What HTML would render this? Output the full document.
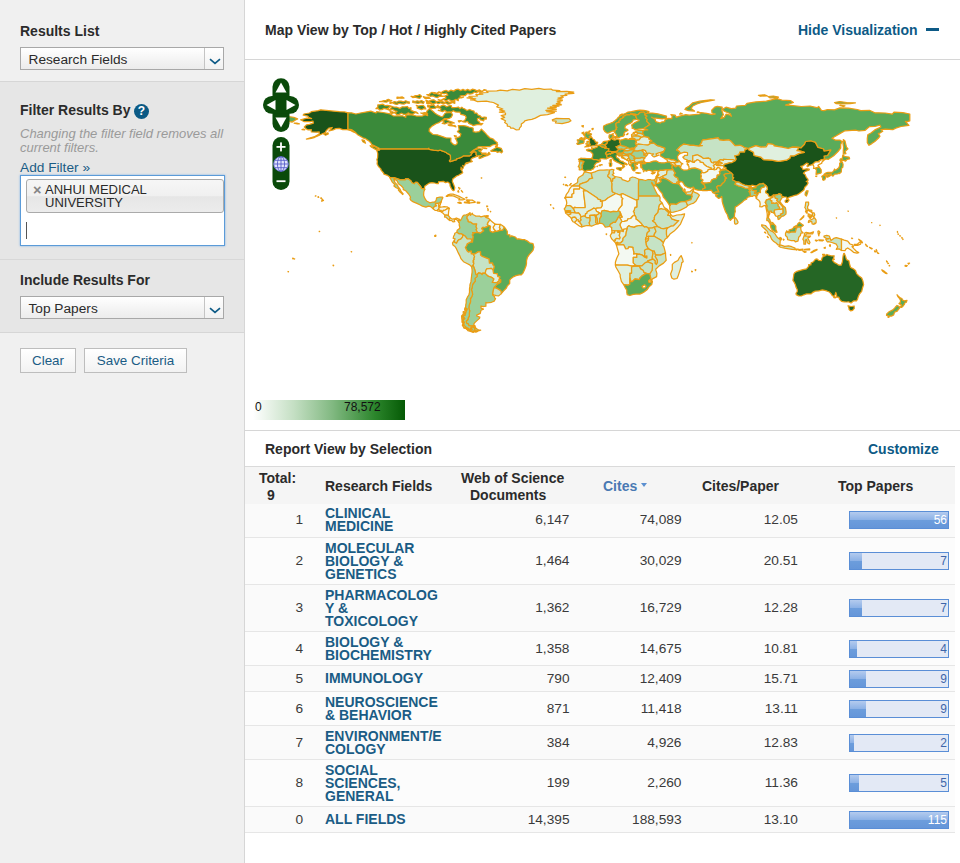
<!DOCTYPE html>
<html>
<head>
<meta charset="utf-8">
<title>Essential Science Indicators</title>
<style>
*{box-sizing:border-box;margin:0;padding:0}
html,body{width:960px;height:863px;overflow:hidden;background:#fff;font-family:"Liberation Sans",sans-serif;color:#333}
#side{position:absolute;left:0;top:0;width:245px;height:863px;background:#f0f0f0;border-right:1px solid #d6d6d6}
.sec{position:absolute;left:0;width:244px}
.dark{background:#e6e6e6;border-top:1px solid #d6d6d6;border-bottom:1px solid #d6d6d6}
.h{position:absolute;left:20px;font-size:14px;font-weight:bold;color:#2b2b2b;white-space:nowrap;line-height:18px}
.sel{position:absolute;left:20px;width:204px;height:23px;border:1px solid #a8a8a8;background:linear-gradient(#ffffff,#f3f3f3 60%,#ececec);font-size:13.7px;line-height:22.4px;padding-left:7.5px;padding-top:0.6px;color:#2b2b2b}
.sel i{position:absolute;right:0;top:0;width:19px;height:21px;border-left:1px solid #c4c4c4;background:linear-gradient(#ffffff,#f1f1f1)}
.sel svg{position:absolute;left:4px;top:9.5px}
.btn{position:absolute;top:348px;height:25px;border:1px solid #bdbdbd;background:linear-gradient(#ffffff,#f2f2f2);font-size:13.4px;line-height:24.4px;color:#1a5c85;text-align:center}
#main{position:absolute;left:245px;top:0;width:715px;height:863px;background:#fff}
.t{position:absolute;white-space:nowrap}
.r{position:absolute;left:0;width:710px;border-bottom:1px solid #e6e6e6}
.r span{position:absolute;white-space:nowrap}
.n{font-size:13.7px;line-height:16px;color:#3a3a3a}
.f{left:80px;font-size:14px;font-weight:bold;line-height:12.8px;color:#1a5c85}
.b{left:604px;width:100px;height:18px;border:1px solid #5a8ed6;background:#e3e9f5}
.b i{position:absolute;left:0;top:0;height:16px;background:linear-gradient(#b4cbee 0%,#8db2e6 48%,#6c9ddc 52%,#6596d9 100%)}
.b b{position:absolute;right:1px;top:1px;font-size:12px;line-height:14px;font-weight:normal}
</style>
</head>
<body>
<div id="side">
  <div class="h" style="top:22px">Results List</div>
  <div class="sel" style="top:47px">Research Fields<i><svg width="12" height="7" viewBox="0 0 12 7"><path d="M1 1.2 L6 5.4 L11 1.2" fill="none" stroke="#0d5a86" stroke-width="1.7"/></svg></i></div>

  <div class="sec dark" style="top:81px;height:252px"></div>
  <div class="sec" style="top:259px;height:1px;background:#d8d8d8"></div>
  <div class="h" style="top:101px">Filter Results By</div>
  <div style="position:absolute;left:134px;top:104px;width:15px;height:15px;border-radius:50%;background:#0b5a85;color:#fff;font-size:12px;font-weight:bold;line-height:15px;text-align:center">?</div>
  <div style="position:absolute;left:20px;top:127px;width:215px;font-size:13px;line-height:14px;font-style:italic;color:#9a9a9a">Changing the filter field removes all<br>current filters.</div>
  <div class="t" style="left:20px;top:159.7px;font-size:13.7px;line-height:16px;color:#1a5c85">Add Filter »</div>
  <div style="position:absolute;left:20px;top:175px;width:205px;height:71px;background:#fff;border:1px solid #5b9bd8;box-shadow:0 0 2px #7db1e6"></div>
  <div style="position:absolute;left:26px;top:179px;width:198px;height:34px;border:1px solid #aaa;border-radius:3px;background:linear-gradient(#f6f6f6 0%,#f0f0f0 50%,#e6e6e6 52%,#ececec 100%)"></div>
  <div class="t" style="left:33px;top:182.5px;font-size:14.5px;font-weight:bold;color:#858585;line-height:14px">×</div>
  <div style="position:absolute;left:45px;top:184px;font-size:13px;line-height:12.5px;color:#2a2a2a">ANHUI MEDICAL<br>UNIVERSITY</div>
  <div style="position:absolute;left:26px;top:222px;width:1px;height:17px;background:#555"></div>

  <div class="h" style="top:271px">Include Results For</div>
  <div class="sel" style="top:296px">Top Papers<i><svg width="12" height="7" viewBox="0 0 12 7"><path d="M1 1.2 L6 5.4 L11 1.2" fill="none" stroke="#0d5a86" stroke-width="1.7"/></svg></i></div>

  <div class="btn" style="left:20px;width:56px">Clear</div>
  <div class="btn" style="left:84px;width:103px">Save Criteria</div>
</div>

<div id="main">
  <div class="t" style="left:20px;top:21px;font-size:14px;font-weight:bold;color:#2b2b2b;line-height:18px">Map View by Top / Hot / Highly Cited Papers</div>
  <div class="t" style="left:553px;top:21px;font-size:14px;font-weight:bold;color:#0d5a86;line-height:18px">Hide Visualization</div>
  <div style="position:absolute;left:681px;top:28px;width:13px;height:3px;background:#0d5a86"></div>
  <div style="position:absolute;left:0;top:59px;width:715px;height:1px;background:#d6d6d6"></div>

  <!-- MAP -->
  <svg id="map" style="position:absolute;left:0;top:60px" width="715" height="370" viewBox="245 60 715 370">
  <g stroke="#ea9d14" stroke-width="1.25" stroke-linejoin="round">
<path fill="#1a531a" d="M376.6 149.9L379.5 150.2L379.9 148.8L402.3 148.8L428.2 148.8L428.9 148.1L429.2 149.4L433.8 150.1L438.2 150.6L440.1 150.1L446.4 152.5L446.9 153.2L448.7 154.1L450.4 155.3L450.6 159.3L449.4 160.8L450.1 161.6L456.5 159.7L456.5 158.8L458.3 158.3L461.1 157.4L463.5 155.8L469.7 155.8L470.9 155.1L471.8 153.4L473.7 151.6L475.3 151.8L476.1 152.2L476.1 154.6L476.8 155.7L477.5 156.2L474.9 157.1L472.3 158.1L471.1 159.3L470.9 160.6L472.3 161.4L471.2 162L469.7 162.1L467.2 162.5L465.6 163.2L468.8 162.8L467 163.6L465.3 163.7L464.9 165.1L463.7 166.3L462.7 165.5L463.4 166.7L463.2 168.1L461.8 169.7L461.1 167.2L460.9 169.5L462 170.6L462.7 172.8L460.9 173.9L458.5 175.3L456.5 176L454.8 177.5L453 178.6L452.3 181.2L453.8 184.9L454.8 187.7L454.4 190L453.4 190.7L452.7 190.3L451.6 188.9L450.1 185.9L449.9 183.8L448.1 182.1L447.3 182.1L445.5 182.6L443.4 181.4L440.8 181.6L438.7 181.6L438.3 183.5L436.4 183.5L434.7 183L432 182.6L429.1 183.2L426.8 184.7L424.7 186.3L424.3 189.1L424.8 189.2L421.4 188.4L420.7 186.5L418.9 184.5L417.3 182.4L415.4 182.4L414.2 183.8L411.9 182.8L411 180.9L408.4 178.9L405.4 178.9L405.4 179.8L400.5 179.8L393.9 177.7L389.9 177.7L389.5 176.8L387.6 175.4L386.2 174.9L383.9 174.2L383.6 173L381.5 170.6L380.4 168.4L379.5 167.6L378.1 165.8L377.1 163.9L377.4 161.4L376.9 159.7L377.6 157.6L377.8 153.8L377.6 152.9ZM355.9 132.8L354.2 131.5L351.5 129.6L348 129.1L348 112.8L344.5 111.9L339.3 111.7L334 111.2L328.8 110.7L320.7 109.8L318.3 110.7L314.8 111.2L311.3 111.7L309.5 113L303.9 114L303.2 115.1L307.8 116.1L308.7 117.3L311.6 118.6L306.9 118.2L300.6 119.8L304.3 121.7L310.4 121.7L313 121.2L313.4 123.1L309.5 124.3L306.4 124.9L304.3 127L306 128.7L307.8 129.8L311.3 129.6L311.3 131.9L316.5 132.2L319.2 131.9L319.2 134L314.8 136.6L310.4 137.8L306.4 139.1L311.3 138.3L314.8 137.3L318.3 135.7L321.8 134L325.3 132.6L326.2 130.8L328.8 128.2L332.3 127.5L329 131L333.2 129.8L335.8 128.7L339.3 128.4L342.8 129.6L347.2 129.6L350.1 130.3L353.3 131.9ZM323.9 134.3L325.6 135.2L328.3 134L327.9 132.8L326.2 133.3ZM294.1 123.1L297.3 124L299.4 123.8L296.8 123.1ZM303.4 129.1L304.8 129.8L302 129.6ZM321.8 201.3L323.5 200.5L322.1 199.2ZM317.9 197.2L318.8 197.3L318.3 196.6ZM315.3 196.1L316 195.9L315.7 195.8ZM320.7 198.2L321.8 198.4L321.1 197.8Z"/>
<path fill="#3a8a3a" d="M348 112.8L351.5 112.8L355.9 114L360.3 113L365.5 112.1L370.8 111.2L376 113L376.6 111.7L383 112.5L390 113.8L393.5 116L402.3 115.8L405.8 117.3L405.8 115.1L411 114.7L416.3 116L422.4 116L425 114.7L427.7 115.6L426.8 113L426.8 111.2L429.4 108.6L432.9 111.2L434.7 113L437.3 114.7L440.8 116.5L442.5 116.8L445.2 113L451.3 112.5L452.5 114.7L451.3 117.3L448.7 118.7L444.3 118.6L442.5 120.3L439 122.6L436.4 123.5L432 126.1L429.4 128.7L429.1 131.3L432.9 134.5L437.3 134.8L442.5 136.6L446 137.8L450.9 138L450.8 141.8L453 144.1L454.8 145L456.5 144.5L457.4 142.7L456.5 140.1L455.3 138.3L460 136.6L460.9 134L457.4 131.7L459.2 129.6L458.3 125.6L463.5 125.6L466.2 126.1L468.8 127L472.3 127.8L473.2 128.2L473.2 131.7L475.8 132.2L479.3 131.7L481.4 129.1L484.5 132.2L487.2 135.2L489.8 137.8L493.3 139.2L495 141L497.3 142.7L496.8 144.1L492.4 145L489.8 146.6L484.5 146.6L478.4 146.8L476.7 148.3L474 149.7L471.4 151.8L470.2 152.7L472.3 151.8L474.9 149.7L479.3 148.5L482.3 149.2L481 150.6L478.8 150.6L481 152L481.9 153.6L483.1 154.1L487.2 154.6L488.9 152.3L490.1 154.1L488 155.3L484.5 156.4L481.9 157.6L479.8 158.5L478.9 157.9L479.3 156.7L481.9 155.3L480.2 155.5L478.4 155.7L477.5 156.2L476.8 155.7L476.1 154.6L476.1 152.2L475.3 151.8L473.7 151.6L471.8 153.4L470.9 155.1L469.7 155.8L463.5 155.8L461.1 157.4L458.3 158.3L456.5 158.8L456.5 159.7L450.1 161.6L449.4 160.8L450.6 159.3L450.4 155.3L448.7 154.1L446.9 153.2L446.4 152.5L440.1 150.1L438.2 150.6L433.8 150.1L429.2 149.4L428.9 148.1L428.2 148.8L402.3 148.8L379.9 148.8L379.2 148.3L376.9 147.1L373.4 145.3L371.7 144.5L370.8 142.7L369 141L366.8 139.6L365.5 138.7L362.9 137.8L360.3 136.2L357.7 134.8L355.9 132.8L354.2 131.5L351.5 129.6L348 129.1ZM370.1 145.7L375.5 146.9L378.8 149.9L376 149.6L371.7 147.3ZM362 139.9L364.3 140.3L365.5 143.2L362.9 141.8ZM490.8 150.8L496.8 147.3L497.7 144.3L497 144.5L495.4 146.6L497.7 147.3L501.2 148.3L502.6 151.5L501.5 152.9L499.9 151.6L497.1 152.5L496.8 151.3L494.2 151.3L491.2 151.3ZM482.1 147.4L486.8 148.7L483.7 148.3ZM482.3 153.1L486.3 153.2L485.4 154.3L483.1 153.9ZM451.3 124.5L454.3 126.1L449.5 125.7L448.1 124.9ZM442.5 120.5L446 119.5L447.8 120.5L452.2 122.2L454.4 123L450.4 123.3L447.8 122.6L444.8 124L442.2 123.3L444.3 122.2ZM454.8 125.4L456 126.8L454.4 126.5ZM454.3 135.6L456.5 136.2L455.1 136.8ZM437.3 105.3L439.6 106.7L442 105.5L444.3 105.3L446.6 106.8L449 105.7L451.3 105.6L451.8 107.7L453.9 107.6L456.1 107.5L458.3 107L460 108.5L461.8 107.2L463 108.2L464.4 108.8L466.9 110.5L469.7 109.5L471.8 110.5L474 111.1L474.5 113.1L476.7 113L478.1 115.1L480.1 115.8L481.8 117.6L484.2 117L486.3 117.3L486.3 119.1L484.2 118.8L483.7 120.8L482 120.2L480.2 120L479.5 118L477.5 118.6L477.5 120.5L479.2 121.7L480.4 123.7L482.8 123.5L481 125L478.4 124.3L475.8 124.9L473.2 125.6L471.1 124.3L468.8 123.5L467.6 121.5L465.3 122.1L463.3 121.9L461.2 120.7L459.2 122.1L458.3 120.8L460.7 120.7L463.2 121.5L465.3 119.8L466.2 117.3L465.3 115.6L463.2 114.8L460.9 114.4L459.9 112.1L457.4 112.1L455.4 111.9L453.3 110.7L451.3 112.1L449.1 111.9L446.9 112.1L444.9 110.4L442.5 111.6L440.4 110.8L438.2 110.3L440.3 110.6L440.8 108.6L439.3 107.9L437.6 107.6ZM387.4 109.5L390.4 109.1L391.8 106.5L394.4 107.1L397 107.2L399.8 108.4L402.3 106.8L404.9 106.9L407.5 106.5L408.8 108.4L411 107.7L411 110.3L413.6 111.4L416.3 112.1L418 113.5L415.2 112.5L412.8 114.2L410.5 114L408.1 112.9L405.8 114.4L403.6 114.3L401.4 113.2L399.2 114.4L397 114.7L394.7 112.7L391.8 113.5L390 111.7L392.4 111.8L394.8 112.9L397 111.4L394.7 110.8L392.6 109.3L390 110.3ZM376 108.6L377.8 107.2L377.8 104.9L380.4 104.7L383 104.2L385.2 105.7L387.7 105.4L390 105.8L392.7 106.5L390.2 106.4L388.5 108.1L386.5 109.1L384.1 108.4L381.9 109.6L379.5 110L378.2 108.4ZM416.3 105.3L418.6 106L421 105.5L423.3 105.4L425 107.2L425.9 109L423.6 108.7L421.5 109.8L419.4 108.9L417.2 108.1L417.4 106.5ZM427.7 105.1L429.7 105.8L431.8 105.2L433.8 105.1L435.3 106.6L437.3 106.8L435.5 108.2L432.9 108.3L430.3 108.6L429.4 107.2L427.7 106.8ZM420.7 113L422.9 113.1L425 112.6L426.3 113.3L427.7 113.8L425.5 113.7L423.3 114.2L422 113.5ZM390 101.8L392.3 102.5L394.4 101.6L396.7 102.2L398.8 101.1L401.1 101.1L403.5 101.8L405.8 100.7L407.5 101.5L409.3 101.9L409.3 103.3L406.6 102.8L404 104.1L401.7 104L399.3 103.3L397 104.4L394.7 103.9L392.5 102.8L390 103.3ZM412.8 100.9L415 101.5L417.2 100.8L419.4 101.3L421.5 100.6L422.8 101.3L424.2 101.9L423.3 103.3L420.7 102.7L418 103.3L415.4 102.8L412.8 102.5ZM379.5 101.6L381.9 101.5L383.9 100.5L386.2 100.4L388.3 99.3L390 100L391.8 100.6L389 100.8L386.5 102.1L384.2 101.9L381.9 101.3ZM425.9 100.2L428.6 101.3L431.2 100.1L433.8 99.8L436.2 101.6L439 101.1L441.7 101.3L444.3 102.3L446.9 101.3L449.5 102.4L452.2 101.4L454.8 101.2L454.8 103.3L452.3 102.4L450.1 103.8L447.8 104.2L445.5 103L443.1 103.9L440.8 102.8L438.5 103.8L436.2 102.7L433.8 103.9L431.5 103.3L429.3 101.9L426.8 102.6ZM426.8 102.5L429 102.7L431.2 102.3L431.2 103.9L429 103.7L426.8 103.5ZM433.8 92.5L436.5 93.5L438.7 91.9L441.4 92.6L443.6 91L446 90.4L448.6 91.5L451 90.1L453.5 91.1L455.9 89.6L458.3 89.2L460.6 90.6L463 89.4L465.3 90.6L467.6 89.4L470 90.6L472.3 89.2L474.6 89.6L476.9 90.9L479.3 89.9L481.5 91.3L484 90.3L486.3 90.2L484 89.6L482.7 91.4L481 92.3L478.6 91.3L476.6 92.8L474.3 92L472.3 93.7L469.9 94.1L467.3 93.5L465.3 95.5L462.7 95.5L460 96L461.3 97.9L463.5 97.2L460.9 97.6L458.3 98.4L458.3 100.7L455.9 99.4L453.6 100.6L451.3 100.9L448.7 99.5L446 100.7L443.4 99.5L440.8 100.9L439.6 100L438.2 99.5L441 100.4L443.5 98.8L446 98.1L444.9 96L442.5 96.3L445.2 95.9L447.8 95.1L446.6 93.1L444.3 93.7L442 93.5L439.6 92.3L437.3 93.7L435.6 92.9ZM426.8 94.6L428.9 94.7L430.4 93.2L432 92.3L434.1 93.7L436.4 93.3L438.4 94.5L440.8 94.1L441.6 95.3L442.5 96.3L439.7 96.1L437.3 97.6L435 97L432.8 95.9L430.3 96.3L428.6 95.4ZM411 96.3L413.4 96.5L415.4 95.6L417.7 95.6L419.8 94.6L421.5 96.3L419.8 98.3L417.5 97.9L415.2 97.2L412.8 97.6ZM423.3 96.7L425.9 97.3L428.5 97.2L430.3 98.4L427.7 98.4L425 98.4ZM397 97.2L399.7 97.4L402.3 96.9L404 98.1L401.7 98.2L399.4 98L397 98.4Z"/>
<path fill="#e0f0df" d="M467 97.8L472.3 97.1L468.8 96.3L477.5 96L475.8 94.6L482.8 94.2L479.3 92.8L488 92.5L486.3 91.1L496.8 90.9L500.3 90.1L507.3 90.8L512.5 89.3L519.5 90.1L524.8 88.6L531.8 89.3L538.8 88.3L544 89.3L551 89L552.8 90.2L559.8 90.6L556.3 91.6L566.8 91.3L573.8 92L568.5 92.8L573.8 93.4L565 94.2L566.8 95.3L560.7 95.8L563.3 97.2L558 98.1L562.4 99L557.2 100L562.4 100.7L557.2 101.8L560.7 103L556.3 103.7L561.5 104.8L552.8 105.4L558.9 106.1L550.2 106.8L556.3 107.7L547.5 108.2L556.3 109.3L545.8 110.3L556.3 111.2L546.7 111.7L554.5 112.6L547.5 114.6L540.5 115.4L535.3 118.1L531.8 119.3L528.3 119.8L524.8 120.8L523.9 122.2L521.3 124L521.3 126.1L519.5 128.2L519.2 129.6L516 129.8L513.4 128.2L510.8 128.2L509.9 126.5L507.3 126.1L507.3 124.3L504.7 122.6L505.5 120.8L501.2 118.6L504.7 117.3L501.2 115.6L505.5 114.6L505.5 113L499.4 112.1L504.7 111.1L499.4 109.8L502.9 109L496.8 106.8L498.5 105.1L493.3 102.5L489.8 101.9L486.3 101.2L477.5 101.6L474 100.2L470.5 99.8L475.8 98.8Z"/>
<path fill="#c6e3c5" d="M552.3 119.8L556.3 118.4L563.3 118.7L569.1 118.6L571 120.8L568.5 122.1L562.1 123.6L555.4 123L556.3 121.2L552.8 121Z"/>
<path fill="#9bd09a" d="M389.9 177.7L393.9 177.7L400.5 179.8L405.4 179.8L405.4 178.9L408.4 178.9L411 180.9L411.9 182.8L414.2 183.8L415.4 182.4L417.3 182.4L418.9 184.5L420.7 186.5L421.4 188.4L424.8 189.2L423.8 191.7L423.6 195.2L424.7 198.2L426.6 201L428.5 202L429.8 202.8L432.9 202L434.7 202L436.1 200.5L436.6 197.8L439.9 197L442.5 197L442.9 197.8L441.7 199.9L441.1 202.6L440.3 202.2L438.8 203.4L435.5 203.4L435.5 204.4L436.6 205.9L434.7 206.4L433.4 207.8L433.4 209.1L430.6 206.6L428.5 206.2L425.9 207.1L422.4 206.1L419.8 204.8L416.3 203.1L413.3 201.9L411 200.5L410 198.9L410.5 197L408.6 194L405.8 190.8L403.3 189.6L403.2 187.9L401.2 185.8L398.4 183.8L397 180.7L393.9 178.9L394.1 180.3L394.9 182.4L397 184.7L398.3 186.8L400 189.1L401.2 191.7L403.2 194L402.5 194.5L401.8 193.5L399.7 191.7L398.4 190L398.4 188.8L396.2 187.7L393.9 185.9L394.9 184.7L392.3 182.1L390.9 179.5Z"/>
<path fill="#e0f0df" d="M433.4 209.1L433.4 207.8L434.7 206.4L436.6 205.9L435.5 204.4L435.5 203.4L438.8 203.4L438.7 206.8L439.2 206.8L440.4 207.1L438.7 208.5L438.4 209.4L437.1 210.5L435 210.3Z"/>
<path fill="#ffffff" d="M438.8 203.4L440.3 202.2L440.6 202.9L440.3 204.8L439.2 206.8L438.7 206.8Z"/>
<path fill="#ffffff" d="M437.1 210.5L438.4 209.4L439.9 210.1L441.3 210.3L441.1 211.2L441 211.6L439.9 211.5L437.6 211Z"/>
<path fill="#f3f9f2" d="M440.4 207.1L442.5 206.9L444.3 206.6L446 206.8L447.3 206.9L449.3 208.3L446.9 208.9L445.2 210.1L443.1 210.4L443.1 211.3L442 211.8L441.7 211.3L441.1 211.2L441.3 210.3L439.9 210.1L438.4 209.4L438.7 208.5Z"/>
<path fill="#f3f9f2" d="M449.3 208.3L448.7 211L448.5 212.9L448.3 215.5L446.6 215.2L444.8 215.2L443.4 213.6L441.3 212L442 211.8L443.1 211.3L443.1 210.4L445.2 210.1L446.9 208.9Z"/>
<path fill="#c6e3c5" d="M444.8 215.2L446.6 215.2L448.3 215.5L450.2 217.8L449.7 218.7L449.7 220.5L448.7 219.7L446.6 217.8L446 217.1L444.6 217.1L444.8 215.7Z"/>
<path fill="#e0f0df" d="M449.7 220.5L449.7 218.7L450.2 217.8L452.2 219.2L454.8 218.5L456.5 218L459.3 219.4L458.5 222L457.6 220.4L455.7 219L454.1 220.1L454.8 221.7L453 221.8L451.8 220.6Z"/>
<path fill="#e0f0df" d="M446.2 196.3L447.8 194.9L450.4 194.2L453 194.2L455.7 195L459.2 196.4L461.8 197.7L464.9 199.2L462.7 199.8L458.8 199.9L459.7 198.5L457.4 197.8L453.9 196.1L451.3 195.6L448.7 195.8L447.8 196.3Z"/>
<path fill="#ffffff" d="M464.4 202.6L466.2 202.8L469.1 203.1L469.1 200.1L467.4 199.8L466.3 200.1L467.4 201L468.3 202L464.4 202Z"/>
<path fill="#f3f9f2" d="M469.1 203.1L470.5 202.8L472.3 202.6L475.1 202.4L475.1 201.9L473.7 201L472.3 200.1L469.1 200.1Z"/>
<path fill="#f3f9f2" d="M457.8 202.6L460 202.2L461.4 203.1L460 203.4Z"/>
<path fill="#e0f0df" d="M477.2 202.2L479.8 202.4L479.6 203.1L477.2 203.1Z"/>
<path fill="#ffffff" d="M458.3 190.5L458.8 192.2L457.8 191.7ZM458.6 187.5L460 188.2L459.5 189.1ZM461.3 190.5L462.7 192.2L461.8 191.4ZM465.8 197.7L467 197.3L466.7 198Z"/>
<path fill="#ffffff" d="M486.5 215.9L488.2 215.7L488 216.9L486.5 216.9Z"/>
<path fill="#ffffff" d="M486.6 206.1L487.7 206.2L487 206.8ZM487.7 208.7L488.4 209.2L487.9 209.4ZM487.9 210.3L488.2 210.6L487.9 210.6ZM490.3 211.3L490.8 211.7L490.5 211.8Z"/>
<path fill="#9bd09a" d="M459.3 219.4L460.4 220.6L461.8 218.3L462.7 216.2L463.9 215.2L466.2 214.8L468.4 213.8L470 212.9L470 213.9L468.8 215L467.2 216.2L467 218.5L468.1 219.9L468.3 221.7L470.9 222.2L473.3 223.9L476.7 223.8L476.1 226.7L477 228.7L476.1 229.7L477.7 232.5L472.6 232.7L473.9 233.5L472.3 234.9L473.3 236.5L472.5 241.9L471.8 241.2L471.1 239L467.2 238.8L465.3 236.3L463 234.8L461.3 233.9L459.2 233.9L456.9 232.2L457.2 230.2L459.2 228.8L459.9 227.8L459.2 225L459.3 222.7L458.5 222Z"/>
<path fill="#c6e3c5" d="M470 212.9L470 213.9L470.5 215.3L472.3 213.2L472.8 214.5L475.3 215.7L475.8 216.2L479.3 216L481 216.9L482.8 216.4L484.5 215.9L486.5 215.9L484.9 216.4L485.8 217.4L488.4 218.3L489.8 219.5L490.1 220.1L488.6 221.5L487.9 222.9L487.3 224.3L488.6 225.5L487.3 226.7L484.9 227.6L482.8 227.4L481.8 228.5L483.8 230.8L480.2 233.2L477.7 232.5L476.1 229.7L477 228.7L476.1 226.7L476.7 223.8L473.3 223.9L470.9 222.2L468.3 221.7L468.1 219.9L467 218.5L467.2 216.2L468.8 215L470 213.9Z"/>
<path fill="#f3f9f2" d="M490.1 220.1L492.4 222L494.9 224.1L494.5 225.5L493.3 227.2L493.6 228.5L495.9 231.3L492.4 232.3L490.3 231.4L489.8 229.9L490.1 227.9L490.5 226.7L489.4 225.5L488.6 225.5L487.3 224.3L487.9 222.9L488.6 221.5Z"/>
<path fill="#f3f9f2" d="M494.9 224.1L497.7 224.3L500.3 224.4L499.4 227.6L500.3 228.5L499.2 230.6L497 231.3L495.9 231.3L493.6 228.5L493.3 227.2L494.5 225.5Z"/>
<path fill="#e0f0df" d="M500.3 224.4L502.4 225.5L504.3 227.2L502.7 230.2L499.2 230.6L500.3 228.5L499.4 227.6Z"/>
<path fill="#5aab5a" d="M504.3 227.2L502.7 230.2L499.2 230.6L497 231.3L495.9 231.3L492.4 232.3L490.3 231.4L489.8 229.9L490.1 227.9L490.5 226.7L489.4 225.5L488.6 225.5L487.3 226.7L484.9 227.6L482.8 227.4L481.8 228.5L483.8 230.8L480.2 233.2L477.7 232.5L472.6 232.7L473.9 233.5L472.3 234.9L473.3 236.5L472.5 241.9L470.9 241.9L467.2 243.7L466.7 245.3L465.3 247.5L467 250.7L468.4 252.1L471.2 251.2L471.2 253.8L473 253.8L474.8 254L478.1 251.9L480.5 251.8L480.5 255.1L482.3 256.5L484.9 257.4L486.6 258.2L488.9 258.8L489.4 263.1L492.6 263.1L492.8 264.9L494.2 266.4L493.5 269.4L492.9 269.9L493.6 273.3L497.1 273.6L497.8 276.6L499.8 276.8L499.2 279.4L500.6 279.6L500.6 282.2L497.1 284.1L494 287.4L497.5 288.7L500.3 290.4L501.2 291.5L501.3 293.6L503.6 290.9L506.4 288L507.3 285.9L509.7 283.6L509.7 280.1L511.1 278.4L513.8 276.6L516 275.6L519.2 274.9L521.3 274.9L523 273.1L524.4 270.1L526 266.1L526.5 263.5L526.5 260.9L527.4 257.4L529.2 254.7L531.1 252.6L533 250.3L533.9 247.2L533 243.7L529.5 242.8L527.4 241.1L524.8 239.7L522.2 239.7L518.7 238.8L517.3 239.2L515.2 237L511.7 235.8L509.9 236.9L509.9 234.9L507.3 234.6L507.3 231.4L505.5 228.5Z"/>
<path fill="#c6e3c5" d="M456.9 232.2L459.2 233.9L461.3 233.9L463 234.8L462.5 237.2L460.8 239.2L458.6 239.8L457.6 241.2L456.5 243.3L454.3 242.3L454.6 241.4L454.3 240.5L455.1 238.8L453.2 238.4L453.6 236.3L454.6 234.6L454.8 233.2Z"/>
<path fill="#c6e3c5" d="M454.3 240.5L454.6 241.4L454.3 242.3L456.5 243.3L457.6 241.2L458.6 239.8L460.8 239.2L462.5 237.2L463 234.8L465.3 236.3L467.2 238.8L471.1 239L471.8 241.2L472.5 241.9L470.9 241.9L467.2 243.7L466.7 245.3L465.3 247.5L467 250.7L468.4 252.1L471.2 251.2L471.2 253.8L473 253.8L474.6 256.5L474 258.4L474.2 259.4L473.3 260.5L473.7 261.4L473 261.9L474 263.1L473.2 265.2L471.6 266.7L469.7 264.9L467 263.5L463.5 261.7L461.1 258.9L459.7 255.6L457.9 252.1L456.5 248.9L455 246.5L452.9 244.9L452.5 242.8Z"/>
<path fill="#c6e3c5" d="M473 253.8L474.8 254L478.1 251.9L480.5 251.8L480.5 255.1L482.3 256.5L484.9 257.4L486.6 258.2L488.9 258.8L489.4 263.1L492.6 263.1L492.8 264.9L494.2 266.4L493.5 269.4L492.9 269.9L491.4 268.4L486.8 268.9L485.8 270.5L485.2 273.4L482.8 273.1L482.1 274.5L480.7 273.3L478.8 272.8L477.2 274.5L475.8 274.5L475.4 272.2L474.9 270.5L474.4 268.7L474 267.9L473.2 265.2L474 263.1L473 261.9L473.7 261.4L473.3 260.5L474.2 259.4L474 258.4L474.6 256.5Z"/>
<path fill="#e0f0df" d="M485.2 273.4L485.8 270.5L486.8 268.9L491.4 268.4L492.9 269.9L493.6 273.3L497.1 273.6L497.8 276.6L499.8 276.8L499.2 279.4L499.1 281.1L497 282.6L495.9 282.7L492.2 282.4L493.8 278.9L491.5 277.3L488 276.2Z"/>
<path fill="#c6e3c5" d="M494 287.4L497.5 288.7L500.3 290.4L501.2 291.5L501.3 293.6L498.7 295.9L496.4 295.7L493.6 294.8L492.6 293.9L492.9 291.5Z"/>
<path fill="#9bd09a" d="M477.2 274.5L478.8 272.8L480.7 273.3L482.1 274.5L482.8 273.1L485.2 273.4L488 276.2L491.5 277.3L493.8 278.9L492.2 282.4L495.9 282.7L497 282.6L499.1 281.1L499.2 279.4L500.6 279.6L500.6 282.2L497.1 284.1L494 287.4L492.9 291.5L492.6 293.9L492.6 295.1L494.7 296.7L494.5 297.9L495.6 298.5L494.2 301.1L491.5 302.3L487.2 302.9L485.9 302.5L485.9 306.2L483.1 306.7L481 306L481 308.1L483.5 309.1L481 310.2L480.3 313.4L476.7 315.1L476.7 316L479.8 317.2L479.5 318.4L476.7 320.9L475.1 322.4L474 323.7L473.9 324.9L475.1 326.2L473.2 325.9L469 325.6L468.1 323.9L466.7 323.3L466.2 321.2L467.9 319.5L468.3 317.7L469.3 316.1L469.3 313.4L469.7 310.7L468.8 308.1L469.1 305.5L469.7 303.7L470.5 302L470.5 298.5L471.6 297.1L472.6 294.4L472.3 292.4L471.4 289.7L472.3 287.1L472.6 284.5L474.4 282.2L475.3 281L474.9 278.4L477 276.6ZM474.8 326.7L474.8 330.7L478.4 330.9L480.7 330.2L478.4 329.8L476.5 328.8L475.4 327.5Z"/>
<path fill="#9bd09a" d="M471.6 266.7L473.2 265.2L474 267.9L474.4 268.7L474.9 270.5L475.4 272.2L475.8 274.5L477.2 274.5L477 276.6L474.9 278.4L475.3 281L474.4 282.2L472.6 284.5L472.3 287.1L471.4 289.7L472.3 292.4L472.6 294.4L471.6 297.1L470.5 298.5L470.5 302L469.7 303.7L469.1 305.5L468.8 308.1L469.7 310.7L469.3 313.4L469.3 316.1L468.3 317.7L467.9 319.5L466.2 321.2L466.7 323.3L468.1 323.9L469 325.6L473.2 325.9L475.1 326.2L473.2 326.5L470.9 327L470.7 328.8L468.8 328.6L466.2 327.4L464.4 325.6L463.5 323L462.7 319.5L464.4 317.7L462.7 316.3L465.3 314.2L466.2 311.6L467.4 309L465.6 307.8L465.8 304.6L466.2 302.9L466.2 299.7L467.4 297.2L468.8 295L469.5 292.4L469.5 288.9L469.8 286.9L470 284.5L470.9 281.9L471.2 279.1L471.6 275.7L472.1 272.2L472.1 269.9ZM474.8 326.7L473.3 327.3L471.8 326.8L471.4 328.2L472.3 329.4L469.7 330L471 330.5L472.3 331.2L474.8 330.7L474.3 328.7ZM464.9 307.8L466.2 308.1L466 310.6L464.6 310.2ZM472.3 331.2L474.1 331.4L475.8 332.1L477.5 331.4L475.3 330.9L473.8 331.1ZM463.2 311.6L465.6 311.9L464.6 313.4L465.3 315.1L464 315.7L462.8 316.5L463.3 318.2L464.9 318.6L463 320.4L464.4 322.4L463.2 324.7L464.3 325.7L465.6 326.5L464.9 327.7L466.6 329.3L468.8 329.1L470.5 330.5L472.3 331.2L474 331.6L476.7 331.9L474.8 331.3L473.2 332.4L470.6 331.4L467.9 330.7L466.4 328.6L463.9 328.1L463.2 326.6L462.3 325.2L463.1 323.6L462 322.1L462 320.3L461.8 318.6L461.6 316L463.3 314.1Z"/>
<path fill="#ffffff" d="M481.2 177.9L481.8 177.9L481.6 178.2Z"/>
<path fill="#ffffff" d="M434.7 235.5L435.9 235.1L435.7 236.3L434.8 236.3Z"/>
<path fill="#5aab5a" d="M614.2 131.2L613.2 130.8L611.4 131.5L608.8 132.9L607 133.1L604.8 131.5L603.5 129.1L603.5 127L603.9 125.7L606.2 124.7L609.7 123.5L613.2 122.1L614.9 120.8L616.7 119.1L618.4 117.3L620.2 116L623.7 114.2L626.3 113L628 112.1L631.5 111.7L635 110.9L637.7 110.3L639.9 110.2L643.8 110.3L647.3 111.1L649 111.6L647.3 112.5L648.7 113L645.4 113.8L643.6 112L640.3 112.3L639.9 112.8L638 114.6L635.9 114.4L631.5 113.8L630.8 113.8L629.8 114.9L626.5 114.7L625.4 115.6L623.1 116.5L623.7 117.3L621.8 118.6L620.2 118.9L620.2 120.3L618.6 121.6L619.3 122.4L617 122.6L615.8 123.8L616.1 126.1L616.3 127.1L617.2 127.3L616.1 128L616.7 129.2L615.4 129.9L615.4 131ZM619.6 115.2L621.9 114L623.1 114L621 115.1Z"/>
<path fill="#5aab5a" d="M614.2 131.2L615.4 131L615.4 129.9L616.7 129.2L616.1 128L617.2 127.3L616.3 127.1L616.1 126.1L615.8 123.8L617 122.6L619.3 122.4L618.6 121.6L620.2 120.3L620.2 118.9L621.8 118.6L623.7 117.3L623.1 116.5L625.4 115.6L626.5 114.7L629.8 114.9L630.8 113.8L632.4 114.4L636.1 115.8L635.9 116.8L636.8 118.6L637 119.5L633.3 119.8L632.4 121.7L630.7 123.1L628 124.3L625.4 125.7L624.9 127.8L625.1 128.6L627.7 129.6L627.9 130.5L626.8 131L624.5 132.1L624 133.4L623.5 135.6L622.8 136.4L620.2 136.6L619.6 137.6L617.5 137.6L616.8 136.4L616.5 135L615.6 133.6L614.4 132.2ZM626.6 134.7L628 133.3L627.7 134.3ZM623.5 136.1L624.7 134.3L624 135Z"/>
<path fill="#5aab5a" d="M630.8 113.8L631.5 113.8L635.9 114.4L638 114.6L639.9 112.8L640.3 112.3L643.6 112L645.4 113.8L644.7 114.7L647.1 116.1L645.5 117.5L647.3 119.6L646.6 121.2L648.2 122.6L649.9 124.5L647.3 126.3L643.8 128.6L643.4 128.7L640.3 128.9L638.5 129.2L635 129.9L634.2 128.9L632.1 128.2L632.2 127L631.7 125L633.3 123.8L635 122.6L637.7 121.2L639.1 120.7L639.2 120L637 119.5L636.8 118.6L635.9 116.8L636.1 115.8L632.4 114.4Z"/>
<path fill="#5aab5a" d="M609.8 138.5L612.1 138.7L612.3 138L611.9 137.3L612.8 136.2L613.9 135.9L612.8 135.4L613.2 134L613.3 133.6L611.4 134.5L609.3 134.8L609 136.1L609 137.5ZM614 137.1L615.4 136.7L616.8 136.6L616.8 137.3L616.1 138L615.8 138.5L614.4 138ZM611.9 137.5L613.5 137.5L613.5 138.2L612.3 138.2Z"/>
<path fill="#256625" d="M584.8 147L587.4 146.6L588.7 146.6L589.5 145.9L591.5 146.1L593 145.8L595.1 145.8L596.5 145.5L597.2 145.1L596.5 144.6L595.8 144.5L596.9 143.9L597.8 142.7L597.1 142L595.3 142L595.3 141.3L594.8 140.8L594.6 140.1L594.4 139.8L592.7 139.1L592.2 138L591.3 136.9L589.4 138.3L588.5 139.2L589.5 140.1L589.5 141.1L589.4 141.3L589.5 142L589.4 142.7L589.5 143.6L590.1 144.3L589.5 145L587.4 145L586.8 145.5L586 146.4Z"/>
<path fill="#9bd09a" d="M589.4 141.3L587.1 141.3L586.8 142.2L587.6 142.7L586.9 143.6L585.7 143.9L587.4 144.3L589.5 144.6L590.1 144.3L589.5 143.6L589.4 142.7L589.5 142Z"/>
<path fill="#5aab5a" d="M591.3 136.9L589.2 136.6L590.2 136.1L591.1 134.8L591.6 134L590.4 133.6L588.1 133.8L587.4 134L589 132.6L589.4 132.1L586 132.1L585.5 133.1L584.6 134.1L585 135.4L583.9 135.4L585.2 136.6L584.8 137.8L586.4 137.5L586.2 138.5L587.8 138.7L589.4 138.3ZM582 132.8L583.9 132.2L583.6 133.3L582.2 133.6ZM583.4 133.8L584.1 133.8L584.6 134.7L583.6 134.7ZM592 128.7L593.2 128.4L592.9 129.6L592.2 129.6ZM589 131.2L590.2 130.8L589.9 131.5Z"/>
<path fill="#9bd09a" d="M582 138.3L583.9 138L585.2 139.1L583.9 139.9L582 139.8L580.6 139.3Z"/>
<path fill="#5aab5a" d="M581.8 137.6L580.3 138.2L579.6 138.9L579.9 139.6L577.3 139.8L577.5 141.1L579 141.5L578.2 142.4L576.8 143.4L577.3 144.3L578.2 144.5L580.4 143.9L582.7 143.4L583.6 143.1L584.1 141.8L583.9 140.3L583.9 139.9L582 139.8L580.6 139.3L582 138.3Z"/>
<path fill="#ffffff" d="M581.8 125.9L583.4 125.6L583.1 127Z"/>
<path fill="#3a8a3a" d="M591.6 158.6L592.5 156.7L592.9 154.8L592.7 153.8L590.9 152L589.9 151.5L587.3 150.8L586.4 149.9L588.7 149.2L591.3 149.6L592.2 149.4L591.5 147.6L592.7 148.1L595 148.1L595.1 147.6L597.4 146.9L597.6 145.5L599.2 145.2L600 145.7L602.1 147.1L603.2 146.9L604.9 148L606 148L609.1 148.8L608.1 151.3L607 151.5L605.5 153.4L605.6 153.8L606.7 154.1L607 154.3L607 155.5L606.5 155.7L607 157.1L608.3 157.4L607.9 157.9L606.3 159L604.1 158.8L601.8 158.5L600 159L600 160.2L598.3 160.4L596 159.7L593.9 159.7ZM611.2 159.3L611.4 161.1L610.9 162.1L609.8 161.1L610 160.1Z"/>
<path fill="#3a8a3a" d="M591.6 158.6L593.9 159.7L596 159.7L598.3 160.4L600 160.2L600.6 160.6L600.4 161.3L598.6 162.1L596.4 162.8L595.3 164.2L594.3 165.5L595.1 166.9L593.9 167.6L593.6 168.8L592 169.3L590.9 170.4L587.1 170.4L585.3 171.4L584.3 171.2L583.6 170.2L581.8 169.5L581.7 168.8L582.5 167.8L582 166.7L582.5 166.2L581.7 165.1L582.7 164.6L582.9 162.8L583.9 161.8L583.2 161.3L580.4 160.9L579.2 161.3L579.2 160.2L578.5 159.3L580.3 158.6L580.8 158.1L582.5 158.3L584.6 158.3L586.9 158.6L588.7 158.5ZM599 165.3L600.2 164.8L600.8 165.1L600 165.8ZM596.9 166.3L597.6 166.2L597.2 166.7ZM601.4 164.6L602.3 164.8L601.8 164.9ZM565.2 185.1L566.4 184.7L565.9 185.6ZM567.1 185.6L567.8 185.4L567.7 185.9ZM569.8 184.5L570.5 184.4L569.9 185.4ZM570.6 183.7L571.3 183.5L570.8 184ZM563.3 184.4L563.6 184.2L563.6 184.7Z"/>
<path fill="#9bd09a" d="M579.2 161.3L580.4 160.9L583.2 161.3L583.9 161.8L582.9 162.8L582.7 164.6L581.7 165.1L582.5 166.2L582 166.7L582.5 167.8L581.7 168.8L581.8 169.5L580.8 169.8L579.2 169.8L579.4 167.4L578.2 166.7L579 165.3L579.4 163.7L579.6 162.5ZM564.7 177.2L565.6 177.2L565.2 177.5Z"/>
<path fill="#3a8a3a" d="M607.9 157.9L608.3 157.4L607 157.1L606.5 155.7L607 155.5L607 154.3L608.6 154.1L609.5 153.4L610.5 154.3L611.1 153.2L613 153.1L613.2 152.5L616 152.3L616.5 152.9L618.8 153.2L618.2 153.8L618.6 154.4L618.9 154.8L617.5 154.8L616.3 155.3L616.3 156.4L616.7 157.6L618.6 158.5L619.6 160.2L621 161.1L623.1 161.3L622.8 162L624.5 162.8L626.3 163.6L627.2 164.4L626.8 164.9L624.9 163.9L623.8 164.6L623.7 165.1L624.7 166.3L623.7 167.4L622.3 168.3L622.1 167.8L623 166.3L622.3 164.6L621 164.2L620 163.6L619.3 163.2L617.5 162.5L616.1 161.6L614 160.4L613.2 159.5L612.8 158.5L611.9 157.6L610.4 156.9L608.8 157.8ZM616.5 168.1L618.1 167.8L622.1 167.6L621.2 169.8L621 170.4L619.8 170.2L616.7 168.8ZM609.1 163L610.9 162.5L611.8 163.2L611.6 166L610.4 166.5L609.5 166L609.5 164.1Z"/>
<path fill="#3a8a3a" d="M605.5 153.4L605.6 153.8L606.7 154.1L607 154.3L608.6 154.1L609.5 153.4L610.5 154.3L611.1 153.2L613 153.1L613.2 152.5L611.6 152.2L611.6 151.5L609.8 151.1L608.1 151.3L607 151.5Z"/>
<path fill="#5aab5a" d="M611.6 151.5L611.6 152.2L613.2 152.5L616 152.3L616.5 152.9L618.8 153.2L620.3 153.4L622.3 152.9L623 152.5L623.7 151.5L624.7 150.6L624.4 149.6L621 148.8L620.5 149.6L618.9 149.2L618.2 149.9L617.2 150.4L617.5 151.5L616.1 151.3L613.2 151.5Z"/>
<path fill="#256625" d="M607.4 141.3L608.8 140.6L609.8 140.3L610.4 139.4L609.8 138.5L612.1 138.7L612.3 139.4L614 139.4L613.9 140.1L615.8 139.8L616.7 139.2L618.4 139.2L619.6 140.3L620 141.5L619.5 142.2L620.5 143.4L620.5 144.5L621 145.5L619.8 145.3L617.5 146.4L616.1 146.6L616.7 147.4L618.9 149.2L618.2 149.9L617.2 150.4L617.5 151.5L616.1 151.3L613.2 151.5L611.6 151.5L609.8 151.1L608.1 151.3L609.1 148.8L606 148L606 147.4L605.5 146.9L606 146.6L605.3 145.7L605.3 145L605.6 143.9L606.7 143.8L607 143.1L607.2 142.2Z"/>
<path fill="#3a8a3a" d="M600.8 144.6L601.8 143.6L602.8 142.7L603.2 141.8L604.4 141.3L606.9 141.1L607.4 141.3L607.2 142.2L607 143.1L606.7 143.8L605.6 143.9L605.3 145L605.3 145.7L604.8 145.7L604.9 145L603.5 144.6L602.3 144.6Z"/>
<path fill="#5aab5a" d="M599.2 145.2L600.8 144.6L602.3 144.6L603.5 144.6L604.9 145L604.8 145.7L605.3 145.7L606 146.6L605.5 146.9L604.9 148L603.2 146.9L602.1 147.1L600 145.7Z"/>
<path fill="#c6e3c5" d="M605.5 146.9L606 147.4L606 148L604.9 148Z"/>
<path fill="#5aab5a" d="M619.6 140.3L622.8 139.6L625.4 138.7L627.3 138.9L627.5 139.4L629.1 139.4L634.7 139.4L635.9 140.1L636.6 142.4L635.4 143.1L636.1 144.5L637 145.7L634.3 148L634.9 148.8L632.4 148.1L629.8 148.5L628 148L627.7 148L626.3 147.1L624.5 146.4L623.3 146.2L622.8 146.1L621 145.5L620.5 144.5L620.5 143.4L619.5 142.2L620 141.5Z"/>
<path fill="#9bd09a" d="M616.1 146.6L617.5 146.4L619.8 145.3L621 145.5L622.8 146.1L623.3 146.2L624.5 146.4L626.3 147.1L627.7 148L626.6 148.3L624.7 149.2L624.4 149.6L621 148.8L620.5 149.6L618.9 149.2L616.7 147.4Z"/>
<path fill="#c6e3c5" d="M624.4 149.6L624.7 149.2L626.6 148.3L627.7 148L628 148L629.8 148.5L632.4 148.1L634.2 148.7L633.5 149.9L631.5 149.7L629.8 150.2L627.7 150.9L624.9 150.6L624.7 150.6Z"/>
<path fill="#9bd09a" d="M623 152.5L623.7 151.5L624.7 150.6L624.9 150.6L627.7 150.9L629.8 150.2L631.5 149.7L633.5 149.9L634.9 150.6L633.3 151.5L631.5 153.8L630.1 153.9L627.7 154.3L625.4 154.3L623.7 153.2Z"/>
<path fill="#9bd09a" d="M618.8 153.2L620.3 153.4L622.3 152.9L623 152.5L623.7 153.2L622.1 153.8L622.3 154.4L621.6 155L620.2 155L618.6 155L618.9 154.8L618.6 154.4L618.2 153.8Z"/>
<path fill="#9bd09a" d="M618.6 155L620.2 155L621.6 155L622.3 154.4L622.1 153.8L623.7 153.2L625.4 154.3L627.7 154.3L628.8 155.5L628 156L626.3 155.7L624.4 155.5L622.4 155.5L622.4 156.4L623.1 157.2L625.6 159.3L627.2 160.2L625.8 159.5L623.7 158.5L621.9 157.8L621.4 157.1L620.9 155.8L619.8 155.3L619.3 156.2L618.6 155.7Z"/>
<path fill="#e0f0df" d="M622.4 155.5L624.4 155.5L626.3 155.7L628 156L628.8 157.1L628.9 158.3L627.5 159L627.2 160.2L625.6 159.3L623.1 157.2L622.4 156.4Z"/>
<path fill="#9bd09a" d="M627.7 154.3L630.1 153.9L631.5 153.8L632.4 155.5L634.2 156.4L634.5 157.2L634 158.5L635 159.2L634 160.6L632.4 160.6L630.8 161.3L629.8 160.1L630 159.7L628.4 158.5L628.9 158.3L628.8 157.1L628 156L628.8 155.5Z"/>
<path fill="#e0f0df" d="M627.2 160.2L627.5 159L628.9 158.3L628.4 158.5L630 159.7L629.8 160.1L628.6 161.3Z"/>
<path fill="#e0f0df" d="M628.6 161.3L629.8 160.1L630.8 161.3L630.7 162.3L631.5 163.2L631 164.4L629.8 165.1L628.6 163.7L628.9 162.3Z"/>
<path fill="#e0f0df" d="M630.8 161.3L632.4 160.6L634 160.6L635 161.6L634.9 162.3L633.1 162.7L631.5 163.2L630.7 162.3Z"/>
<path fill="#5aab5a" d="M629.8 165.1L631 164.4L631.5 163.2L633.1 162.7L634.9 162.3L637.7 162L640.3 161.6L641.3 162.1L640.8 163L638.5 163L636.8 163.4L637.5 164.4L635.8 164.8L634.9 163.7L634.3 164.6L635.6 166L634.9 166.7L636.8 167.8L636.8 168.8L635.4 168.1L635.2 169.1L634.9 170.7L634 170.9L632.8 170.2L631.7 168.4L632.9 167.6L631.7 167.6L631 166.7L631 165.8ZM635.9 172.5L637.7 172.7L640.8 173L638.5 173.5L636.1 173ZM643.3 171.2L644.1 170.9L643.8 171.8ZM640.3 165.8L641.3 166.2L640.6 166.3ZM635.6 166.5L637.1 167.1L637.7 168.1L635.9 167.1Z"/>
<path fill="#c6e3c5" d="M634.5 157.2L635 157.9L637.7 158.1L640.3 157.8L642 157.4L644.8 158.1L643.6 159.7L643.8 161.1L641.3 161.3L640.3 161.6L637.7 162L634.9 162.3L635 161.6L634 160.6L635 159.2L634 158.5Z"/>
<path fill="#9bd09a" d="M630.3 153.9L631.5 153.8L633.3 151.5L634.9 150.6L637.7 150.8L641.3 150.1L644 152.5L644.1 155L646.8 155.5L644.8 157.6L644.8 158.1L642 157.4L640.3 157.8L637.7 158.1L635 157.9L634.5 157.2L634.2 156.4L632.4 155.5Z"/>
<path fill="#e0f0df" d="M641.3 150.1L642.9 149.7L645.5 150.6L645.9 151.6L647.3 153.4L645.4 153.8L644.1 155L644 152.5Z"/>
<path fill="#c6e3c5" d="M633.5 149.9L634.2 148.7L634.9 148.8L634.3 148L637 145.7L636.1 144.5L638.5 143.8L642.9 144.5L648.2 144.8L650.4 143.4L653.9 142.9L656.8 145.3L660.2 146.4L664.4 147.8L665 148.3L664.3 150.9L661.6 152.2L658.7 152.9L656 153.8L656.6 155.3L658.7 155.1L656.9 155.8L654.3 156.9L653.2 156.6L651.7 155.1L653.6 153.9L650.8 153.6L649 153.1L648.5 153.2L646.8 155.5L644.1 155L645.4 153.8L647.3 153.4L645.9 151.6L645.5 150.6L642.9 149.7L641.3 150.1L637.7 150.8L634.9 150.6Z"/>
<path fill="#e0f0df" d="M636.6 142.4L635.9 140.1L639.4 139.6L639.9 138.5L641.3 137.1L644.1 136.4L648.9 137.3L649 138.9L652 141.1L649.6 141.7L650.4 143.4L648.2 144.8L642.9 144.5L638.5 143.8L636.1 144.5L635.4 143.1Z"/>
<path fill="#c6e3c5" d="M632.1 138L631.7 136.4L633.3 135.9L638.4 135.9L641.3 137.1L639.9 138.5L639.4 139.6L635.9 140.1L634.7 139.4L634.7 138.5Z"/>
<path fill="#c6e3c5" d="M631.7 136.4L631.5 134.8L632.8 133.8L634.3 133.6L635.4 134.8L637 134.7L637.3 133.3L639.4 133.1L642.8 134L643.6 134.8L644.1 136.4L641.3 137.1L638.4 135.9L633.3 135.9Z"/>
<path fill="#9bd09a" d="M637.3 133.3L637.7 132.6L635.9 132.1L635.9 131L638.5 130.5L640.3 130.3L643.8 130.5L642.8 131.7L642.9 133.3L642.8 134L639.4 133.1ZM633.3 132.6L634.9 132.1L635.4 132.4L633.6 133.1Z"/>
<path fill="#5aab5a" d="M629.1 139.4L629.8 138.5L632.1 138L634.7 138.5L634.7 139.4ZM648.7 113L652.5 113.1L657.8 113.8L666.5 116.1L666.5 118.2L662.2 118.9L656 118.1L652.5 117.9L651.7 117.2L655.2 119.5L655.7 121.7L660.4 123L661.3 122.1L664.8 121.6L664.8 120L668.3 118.4L671.8 118.7L672.1 116L670.9 114.7L675.3 115.2L676.2 117.3L678.8 116.3L685.8 114.7L689.3 115.2L694.5 114.6L699.8 114L700.7 112.6L706.8 113.3L712 114.7L715.5 114L712 113L711.7 110.3L714.7 107.2L717.3 106.3L722.2 107.2L721.7 110.3L723.4 114.7L720.8 118.6L724.3 117.3L726 114.2L730.4 115.2L731.3 116.3L730.4 113.8L724.3 111.2L722.5 109.3L726 107.2L731.3 108.6L735.7 108.2L736.5 106L745.3 105.4L747 103.3L755.8 101.9L766.3 101.2L776.8 98.6L782 100.2L790.8 100.7L793.4 102.5L785.5 105.1L790.8 105.4L801.3 106.5L810 106L817 107.7L818.8 106.5L821.4 110.3L824 110.7L827.5 109.5L834.5 109.8L839.8 107.9L848.5 108.2L857.3 109.5L860.8 110.7L869.5 110.3L874.8 112.8L878.3 112.8L885.3 113L892.3 114.2L894 112.1L902.8 112.6L909.8 114L909.8 120.8L907.2 121.6L905.4 121.4L908 124.3L908.9 125.4L901 126.5L895.8 128.2L892.8 129.6L885.3 129.2L880.9 129.6L882.7 131.3L880 133.1L878.3 133.4L880 136.2L878.3 138.3L874.8 141.5L871.8 143.6L869 145.3L867.3 142.7L867.3 138.3L867.8 134.8L871.3 132.8L874.8 129.9L880.9 127L880 125.2L874.8 126.5L869.5 126.6L865.2 130.3L859 131L855.5 130.1L845 130.8L840.7 133.1L836.3 135.7L831.9 138.3L835.4 140.1L839.8 140.1L842.1 141.5L840.7 144.5L840.7 148L838 151.5L833.7 155.8L828.4 159.3L825.8 159L823.5 160.6L823.3 159.7L824.4 158.5L824 156L827.5 155.5L830.7 150.1L824 151.1L823.5 149L817.9 147.4L815.3 142.4L810.9 141L805.7 141.5L804.4 144.5L800.9 148L799 147.3L792.5 147.1L788.2 148.5L782 147.1L774.2 145.9L773.6 144.5L768 143.6L766.3 146.8L761 147.1L755.8 145.7L751.4 147.4L748.4 148.5L744.1 147.6L743.5 146.8L740 145.3L735 145.7L731.1 141.3L728.7 139.8L723.4 140.4L719.4 139.8L718.2 137.8L714.7 138.3L709.4 139.1L702.4 140.1L701.5 142.7L699.8 145.3L702.4 145.7L698.9 146.2L693.7 145.3L690.2 145.3L686.7 144.5L683.7 144.1L679.7 146.8L676.7 150.1L679.1 151.1L680.5 153.4L678.8 154.4L677.4 156.7L677.9 159.3L679.7 161.4L677.6 162.3L676.2 161.3L673.5 159.9L671.4 159.9L669.2 159L664.8 158.6L662.2 156.9L660.1 155.8L660.4 154.1L661.6 153.1L663.4 152.2L661.6 152.2L664.3 150.9L665 148.3L664.4 147.8L660.2 146.4L656.8 145.3L653.9 142.9L650.4 143.4L649.6 141.7L652 141.1L649 138.9L648.9 137.3L644.1 136.4L643.6 134.8L642.8 134L642.9 133.3L642.8 131.7L643.8 130.5L645.5 129.6L647.8 129.8L645.5 129.2L644.7 128.7L643.4 128.7L643.8 128.6L647.3 126.3L649.9 124.5L648.2 122.6L646.6 121.2L647.3 119.6L645.5 117.5L647.1 116.1L644.7 114.7L645.4 113.8ZM684.9 109.5L688.4 110.7L694.5 111.1L691 108.6L692.8 106L696.3 104.2L701.5 102.5L708.5 101.1L714.7 100L710.3 99.8L699.8 101.2L692.8 102.8L689.3 106L685.8 108.1ZM680.5 113L682.3 113.8L679.7 114.2ZM698 111.7L699.8 112.5L697.2 112.3ZM768 96.5L773.3 96L778.5 97.1L776.8 97.9L769.8 97.8ZM758.4 95.3L764.5 94.8L767.2 95.8L760.2 96.2ZM834.5 102.5L839.8 101.6L846.8 102.5L855.5 102.8L850.3 103.7L841.5 103.9L836.3 103.7ZM839.8 105.4L845 105.8L843.3 106.5ZM843.3 139.6L845 141L845.6 143.6L846.5 147.1L848 148.8L845 151.5L845.9 153.6L843.3 154.1L843.3 150.6L843.6 147.1L843 143.6L843.3 141ZM279.8 114L285 115.1L288.5 116.5L293.8 117.3L297.6 118.9L295.5 120L292 122.1L287.7 121.2L284.2 120L281.5 118.6L283.3 120L279.8 120.8Z"/>
<path fill="#5aab5a" d="M640.3 161.6L641.3 161.3L643.8 161.1L645.5 162.5L642.9 162.8L641.5 163.9L640.6 164.2L640.8 163L641.3 162.1ZM640.6 164.6L641.7 163.9L645.5 163.7L645.9 162.5L649.9 162.3L653.4 161.1L656 160.9L658.7 162.3L661.3 162.8L664.8 162.8L667.4 162L669.3 161.8L670.9 162.7L671.3 164.4L673.2 165.1L672.5 165.6L671.8 167.4L673.2 169.5L672.3 169.8L669 169.7L666.5 169.7L663 170.4L659.5 170.4L659 171.2L658.1 171.9L658.1 170.6L656.9 170.6L655.2 170.4L652.5 171.4L650.8 170.7L648.3 170.2L646.4 171.2L644.1 170.2L642.8 169.8L642.4 168.3L640.8 167.6L641.7 166.5L641.7 165.5L640.6 165.5Z"/>
<path fill="#c6e3c5" d="M651.3 173.3L652.5 172.7L655.3 172.1L654.3 173.3L652.5 174Z"/>
<path fill="#c6e3c5" d="M585.3 171.8L590.9 173.2L591.6 174.2L591.8 176L592.7 178.2L589.5 178.9L588.3 180.7L586 182.1L583.4 182.8L579.6 184.4L579.6 186.1L571.7 186.1L574.7 184.2L577.3 182.8L577.8 181.2L577.6 179.5L578.7 177.5L581.5 175.8L582.9 174.9L584.3 172.1Z"/>
<path fill="#f3f9f2" d="M571.7 186.1L579.6 186.1L579.6 189.1L573.8 189.1L573.8 193.5L572 194.3L572 197.3L565 197.3L565 198.2L566.4 194.3L568.5 191.7L569.4 189.1Z"/>
<path fill="#f3f9f2" d="M565 198.2L565 197.3L572 197.3L572 194.3L573.8 193.5L573.8 189.1L579.6 189.1L579.6 186.8L586.4 190.8L583.4 190.8L585.2 205.7L585.2 207.5L578.5 207.5L576.1 207.7L574.7 207.3L573.4 208.7L571.2 206.4L569.4 205.5L566.3 205.7L565.9 206.4L566.8 203.1L566.4 200.7L565.4 197.8Z"/>
<path fill="#c6e3c5" d="M590.9 173.2L594.8 171.9L597.4 170.7L600 170.2L603.5 170.2L607 169.8L609.8 170L609.3 171.6L609.1 173.9L607.9 175.1L607.9 176.5L610.5 178.4L611.4 181.6L612.1 183.8L611.9 187.3L612.3 191.7L615.8 193.5L607.9 198L604.9 200.5L602.1 201.2L600.4 201.3L600.6 199.9L597.9 199.1L596.9 197.7L586.4 190.8L579.6 186.8L579.6 184.4L583.4 182.8L586 182.1L588.3 180.7L589.5 178.9L592.7 178.2L591.8 176L591.6 174.2Z"/>
<path fill="#c6e3c5" d="M609.8 170L611.9 169.3L612.8 169.5L614 169.8L613.2 171.1L613.3 172.5L614 173.3L612.3 174.8L613.7 175.8L614.9 176.5L614.9 177.9L612.8 178.9L612.6 181.2L611.4 181.6L610.5 178.4L607.9 176.5L607.9 175.1L609.1 173.9L609.3 171.6Z"/>
<path fill="#c6e3c5" d="M614.9 176.5L617.9 177L621.4 177.9L622.3 179.7L625.4 180.7L628 181.6L629.8 180.3L629.8 178.2L632.4 177L635 177.5L638.9 179.3L638.5 183.5L638.5 196.1L638.5 199.6L636.8 199.6L636.8 200.5L622.8 193.7L621 194.3L619.6 195L615.8 193.5L612.3 191.7L611.9 187.3L612.1 183.8L611.4 181.6L612.6 181.2L612.8 178.9L614.9 177.9Z"/>
<path fill="#9bd09a" d="M638.9 179.3L642 179.7L645.5 180.5L648.2 179.5L650.8 179.7L651.7 180.2L654.6 179.8L655.9 183L654.8 185.6L655 185.9L653.4 185.1L651.8 182.3L651.5 183L653.6 186.5L654.3 188.2L656 191.7L657.3 194.3L659.4 196.1L649.9 196.1L638.5 196.1L638.5 183.5Z"/>
<path fill="#c6e3c5" d="M638.5 196.1L659.4 196.1L660.1 197.8L659.9 200.5L662.2 203.1L659.5 204.8L658.7 208L658.5 209.4L658 212.4L656 214.5L654.8 215.9L654.3 218L654.5 219.7L652.5 220.8L655.2 222.7L656.6 225.2L657.6 226.5L654.3 227.2L652.5 227.9L649 228.1L648.7 228.5L646.4 226.7L644.5 227.1L642.8 225.7L641 223.2L638.9 221.3L636.8 219.5L635.9 219.2L635.9 217.1L634.9 215.5L634.3 214.5L634.2 212.4L633.3 211.8L634.2 209.9L635 207.1L636.8 207.1L636.8 200.5L636.8 199.6L638.5 199.6Z"/>
<path fill="#f3f9f2" d="M621 194.3L622.8 193.7L636.8 200.5L636.8 207.1L635 207.1L634.2 209.9L633.3 211.8L634.2 212.4L634.3 214.5L634.9 215.5L632.8 216L630.7 218.5L628 218.8L627.2 220.6L624.2 221.3L621.9 221.5L621 219.7L619.3 217.1L622.1 217.1L621 214.5L620.2 212.2L619.6 211.7L618.4 210.8L618.6 209.2L621.9 205.2L621.9 199.6L622.8 198.7L621.2 197.3Z"/>
<path fill="#f3f9f2" d="M615.8 193.5L619.6 195L621 194.3L621.2 197.3L622.8 198.7L621.9 199.6L621.9 205.2L618.6 209.2L618.4 210.8L616.7 211.7L613.2 211.3L610.5 212.2L608.4 211.3L606.2 210.8L604.2 210.4L601.8 211L601.1 214.1L599.7 212.9L599 213.1L598.5 212.4L596.5 211.2L595.3 208.5L597.1 207.8L600.9 207.7L602.1 205.7L602.1 201.2L604.9 200.5L607.9 198Z"/>
<path fill="#e0f0df" d="M586.4 190.8L596.9 197.7L597.9 199.1L600.6 199.9L600.4 201.3L602.1 201.2L602.1 205.7L600.9 207.7L597.1 207.8L595.3 208.5L593.6 208.2L591.3 209.8L589.5 210.6L587.3 211.7L586.9 213.4L585.5 213.9L585.2 216.4L583.9 216L581 216.8L580.4 215.5L579.9 214.5L578.5 212.9L576.8 213.2L574.8 212.9L574.8 211.8L573.4 208.7L574.7 207.3L576.1 207.7L578.5 207.5L585.2 207.5L585.2 205.7L583.4 190.8Z"/>
<path fill="#c6e3c5" d="M565.9 206.4L566.3 205.7L569.4 205.5L571.2 206.4L573.4 208.7L574.8 211.8L574.8 212.9L570.8 212.5L567.7 212.5L565.6 212.9L565.4 211.7L568.5 211.5L570.6 211.3L570.6 210.8L568.5 210.6L565.4 210.8L564.2 208.9L565.4 207.5Z"/>
<path fill="#e0f0df" d="M565.4 211.7L568.5 211.5L570.6 211.3L570.6 210.8L568.5 210.6L565.4 210.8Z"/>
<path fill="#e0f0df" d="M565.6 212.9L567.7 212.5L570.8 212.5L570.8 214.1L569.1 214.5L568.5 215.5L566.8 214.1Z"/>
<path fill="#e0f0df" d="M568.5 215.5L569.1 214.5L570.8 214.1L570.8 212.5L574.8 212.9L576.8 213.2L578.5 212.9L579.9 214.5L580.4 215.5L581 216.8L580.4 218.8L581.3 219.9L579.9 221.3L578.3 221.7L578.2 219.9L576.8 219.7L576.2 218.5L575 217.1L572.9 217.3L571.5 218.7L570.6 217.4L569.2 216.2Z"/>
<path fill="#e0f0df" d="M571.5 218.7L572.9 217.3L575 217.1L576.2 218.5L576.8 219.7L576.2 220.9L574.7 222.5L572.9 221.7L571.7 219.9Z"/>
<path fill="#f3f9f2" d="M574.7 222.5L576.2 220.9L576.8 219.7L578.2 219.9L578.3 221.7L579.9 221.3L580.3 223.4L581.7 224.4L581.7 226.9L579 225.8L575.9 223.6Z"/>
<path fill="#c6e3c5" d="M581.7 226.9L581.7 224.4L580.3 223.4L579.9 221.3L581.3 219.9L580.4 218.8L581 216.8L583.9 216L585.2 216.4L586.6 217.6L589.5 217.3L590.1 218L590.1 220.6L589.2 222.7L589.9 225.7L586.9 225.5L584.3 226.2Z"/>
<path fill="#e0f0df" d="M585.2 216.4L585.5 213.9L586.9 213.4L587.3 211.7L589.5 210.6L591.3 209.8L593.6 208.2L595.3 208.5L596.5 211.2L598.5 212.4L599 213.1L599 213.8L596.5 215.2L596.4 215.3L594.6 215.2L589.9 215.3L590.1 218L589.5 217.3L586.6 217.6Z"/>
<path fill="#c6e3c5" d="M589.9 225.7L589.2 222.7L590.1 220.6L590.1 218L589.9 215.3L594.6 215.2L595.5 216.6L595.8 219.7L595.8 222.3L596.9 223.9L594.8 224.8L591.6 226.2Z"/>
<path fill="#c6e3c5" d="M596.9 223.9L595.8 222.3L595.8 219.7L595.5 216.6L594.6 215.2L596.4 215.3L596.2 216.6L597.2 218.3L597.6 222.3L597.9 223.8Z"/>
<path fill="#c6e3c5" d="M597.9 223.8L597.6 222.3L597.2 218.3L596.2 216.6L596.4 215.3L596.5 215.2L599 213.8L599 213.1L599.7 212.9L601.1 214.1L601.4 216.2L599.7 218.8L599.5 223.4Z"/>
<path fill="#9bd09a" d="M599.5 223.4L599.7 218.8L601.4 216.2L601.1 214.1L601.8 211L604.2 210.4L606.2 210.8L608.4 211.3L610.5 212.2L613.2 211.3L616.7 211.7L618.4 210.8L619.6 211.7L620.2 212.2L620.3 214.5L618.4 217.1L617.2 219.4L615.4 222.3L613.3 222.3L611.9 223.4L610.4 224.3L609.7 226.4L607 226.9L605.3 227.1L604.1 225.3L602.5 223.6L600.8 223.4Z"/>
<path fill="#c6e3c5" d="M609.7 226.4L610.4 224.3L611.9 223.4L613.3 222.3L615.4 222.3L617.2 219.4L618.4 217.1L620.3 214.5L620.2 212.2L621 214.5L622.1 217.1L619.3 217.1L621 219.7L621.9 221.5L620.2 224.1L620.3 225.8L622.8 230.8L621 231.1L618.1 230.8L614.6 230.8L611.9 230.6L611.6 228.5L611.8 227.6Z"/>
<path fill="#f3f9f2" d="M611.9 230.6L614.6 230.8L614.6 232.8L611.9 232.8Z"/>
<path fill="#e0f0df" d="M611.9 232.8L614.6 232.8L614.6 230.8L618.1 230.8L617.9 232.3L620 232.3L619.3 235.5L620.2 237.8L619.3 239L616.7 238.4L615.1 239.5L615.4 240.7L614.2 241.4L611.6 238.8L610.2 235.8L611.1 234.1Z"/>
<path fill="#e0f0df" d="M614.2 241.4L615.4 240.7L615.1 239.5L616.7 238.4L619.3 239L620.2 237.8L619.3 235.5L620 232.3L617.9 232.3L618.1 230.8L621 231.1L622.8 230.8L623.1 231.6L623.7 229L627.3 228.5L626.3 232L625.8 235.5L623.1 238.1L622.8 240.7L621 242.5L620 243.2L618.2 243.2L617.2 242.3L615.8 243.3Z"/>
<path fill="#f3f9f2" d="M621.9 221.5L624.2 221.3L627.2 220.6L628 218.8L630.7 218.5L632.8 216L634.9 215.5L635.9 217.1L635.9 219.2L636.8 219.5L638.9 221.3L641 223.2L642.8 225.7L639.4 225.5L635.8 226.4L634.2 227.4L630.7 226.7L628.9 225.7L627.3 227.1L627.3 228.5L623.7 229L623.1 231.6L622.8 230.8L620.3 225.8L620.2 224.1Z"/>
<path fill="#c6e3c5" d="M616.3 244.8L617.2 243.2L618.2 243.2L620 243.2L621 242.5L622.8 240.7L623.1 238.1L625.8 235.5L626.3 232L627.3 228.5L627.3 227.1L628.9 225.7L630.7 226.7L634.2 227.4L635.8 226.4L639.4 225.5L642.8 225.7L644.5 227.1L646.4 226.7L648.7 228.5L649.6 230.8L647.3 232.8L646.6 235.5L646.6 237L645.9 237.6L645.5 239.3L645.9 240.4L646.1 242.3L646.4 245.1L648.5 248.9L645.4 249.5L644.5 250.9L645 253.3L644.5 255.4L645.5 256.3L646.9 255.9L646.9 258.1L644.7 257.2L642.4 255.2L639.1 254.2L637.5 254.4L636.8 253.7L633.6 254.2L633.8 252.1L632.9 248.6L632.9 247.4L628.9 246.8L628 248.6L625.6 248.8L623.8 244.9L617.5 244.9Z"/>
<path fill="#f3f9f2" d="M616.3 244.8L617.5 244.9L623.8 244.9L625.6 248.8L628 248.6L628.9 246.8L632.9 247.4L632.9 248.6L633.8 252.1L633.6 254.2L636.8 253.7L636.8 257.4L633.3 257.4L633.3 262.9L635.8 265.4L632.2 266.1L627.2 265.1L619.3 265.1L615.4 264.9L615.4 262.2L616.7 258.2L618.9 253.8L617.9 250.3L616.5 245.3ZM615.8 243.3L617.2 242.3L617.7 242.8L616.3 244.8Z"/>
<path fill="#c6e3c5" d="M648.7 228.5L649 228.1L652.5 227.9L654.3 227.2L655.2 229L656 231.6L654.3 234.1L654.1 236.3L648.2 236.3L646.6 237L646.6 235.5L647.3 232.8L649.6 230.8Z"/>
<path fill="#f3f9f2" d="M645.9 237.6L646.6 237L648.2 236.3L648.7 238.6L645.5 239.3Z"/>
<path fill="#e0f0df" d="M645.5 239.3L648.7 238.6L648.2 240.4L646.1 242.3L645.9 240.4Z"/>
<path fill="#c6e3c5" d="M654.3 227.2L657.6 226.5L658.7 226.9L661.3 228.3L663.9 228.7L666.5 227.8L668.1 227.7L666.5 229.7L666.5 234.6L667.4 237.6L665.1 239.3L663.4 242.8L660.6 240L654.1 236.3L654.3 234.1L656 231.6L655.2 229Z"/>
<path fill="#c6e3c5" d="M663.4 242.8L660.6 240L654.1 236.3L648.2 236.3L648.7 238.6L648.2 240.4L646.1 242.3L646.4 245.1L648.5 248.9L652.4 251L654.3 251.2L655.2 254.7L656 254.9L660.4 255.1L665.5 253L664.4 248.6L663.8 246.5L662.7 245.1Z"/>
<path fill="#c6e3c5" d="M658.5 209.4L661.1 208.5L663 209L665.1 209.2L669 212.7L667.9 215.3L669.9 215.5L671.8 218.8L677 220.6L678.8 220.6L673.5 225.8L670.9 226.2L668.1 227.7L666.5 227.8L663.9 228.7L661.3 228.3L658.7 226.9L657.6 226.5L656.6 225.2L655.2 222.7L652.5 220.8L654.5 219.7L654.3 218L654.8 215.9L656 214.5L658 212.4Z"/>
<path fill="#f3f9f2" d="M662.2 203.1L659.5 204.8L658.7 208L658.5 209.4L661.1 208.5L663 209L665.1 209.2L669 212.7L670.2 212.4L666.9 209L664.3 207.5L663.4 205.7Z"/>
<path fill="#f3f9f2" d="M670.2 212.4L669 212.7L667.9 215.3L669.9 215.5L670.6 214.5Z"/>
<path fill="#e0f0df" d="M670.6 214.5L669.9 215.5L671.8 218.8L677 220.6L678.8 220.6L673.5 225.8L670.9 226.2L668.1 227.7L666.5 229.7L666.5 234.6L667.4 237.6L670 234.1L674.1 231.1L677.9 227.2L680.5 224.1L682.3 219.7L684 216.2L684.6 213.9L681.4 214.7L677 215L672.7 216.4Z"/>
<path fill="#c6e3c5" d="M636.8 253.7L637.5 254.4L639.1 254.2L642.4 255.2L644.7 257.2L646.9 258.1L646.9 255.9L645.5 256.3L644.5 255.4L645 253.3L644.5 250.9L645.4 249.5L648.5 248.9L652.4 251L653.1 253.5L652.5 255.6L652.2 258.4L652.9 259.1L647.8 260.9L648 261.9L645.4 262.6L642 265.9L639.1 265.8L635.8 265.4L633.3 262.9L633.3 257.4L636.8 257.4Z"/>
<path fill="#c6e3c5" d="M652.4 251L654.3 251.2L655.2 254.7L655.9 254.9L655.3 256.5L657.4 260.1L657.4 262.6L656.4 264.5L655 263.1L655.2 260.9L652.9 259.1L652.2 258.4L652.5 255.6L653.1 253.5Z"/>
<path fill="#c6e3c5" d="M665.5 253L660.4 255.1L656 254.9L655.9 254.9L655.3 256.5L657.4 260.1L657.4 262.6L656.4 264.5L655 263.1L655.2 260.9L652.9 259.1L647.8 260.9L648 261.9L649.6 262.6L652.4 263.8L652.4 267L652 270.5L649.6 273.8L650.6 277.3L650.8 279.9L651 281.5L652.4 281.6L651.8 279.9L652.5 278.9L656.6 276.6L656.9 273.4L656 270.5L655.7 269.2L659.2 265.9L663.6 263.1L666.2 260.3L665.7 256.5Z"/>
<path fill="#c6e3c5" d="M639.1 265.8L642 265.9L645.4 262.6L648 261.9L649.6 262.6L652.4 263.8L652.4 267L652 270.5L649.6 273.8L646.2 273.4L643.8 272.4L643.3 270.5L640.6 268.9Z"/>
<path fill="#c6e3c5" d="M639.1 265.8L640.6 268.9L643.3 270.5L643.8 272.4L646.2 273.4L642 275.9L639.9 278L639.4 279.6L635 278.9L632.4 281.5L631 281.5L629.8 278L629.8 273.1L631.5 273.1L631.5 266.6L635.6 266.1L637.7 266.1Z"/>
<path fill="#e0f0df" d="M615.4 264.9L619.3 265.1L627.2 265.1L632.2 266.1L635.8 265.4L639.1 265.8L637.7 266.1L635.6 266.1L631.5 266.6L631.5 273.1L629.8 273.1L629.8 278L629.8 284.3L628 285.2L625.4 284.8L623.7 284.6L621.4 281.3L620.2 276.6L620.2 274.7L618.2 271L615.8 267Z"/>
<path fill="#5aab5a" d="M623.7 284.6L625.4 284.8L628 285.2L629.8 284.3L629.8 278L631 281.5L632.4 281.5L635 278.9L639.4 279.6L639.9 278L642 275.9L646.2 273.4L649.6 273.8L650.6 277.3L650.8 279.9L649.8 279.6L648.7 280.8L649 282.2L650.8 282.2L651 281.5L652.4 281.6L651.7 284.5L649 286.9L647.3 289.4L644.1 292L642 293.2L639.8 294.1L635.9 294.1L633.3 294.4L629.8 295.5L627.2 294.6L626.8 292.4L626.8 290.1L624.9 287.1Z"/>
<path fill="#ffffff" d="M642 286.4L644.7 284.8L646.2 286.2L644.7 288L642.9 287.8Z"/>
<path fill="#e0f0df" d="M650.8 279.9L649.8 279.6L648.7 280.8L649 282.2L650.8 282.2L651 281.5Z"/>
<path fill="#e0f0df" d="M681.1 255.6L682.6 259.1L683.2 261.7L681.8 262.6L681.4 265.2L680.2 269.6L677.9 276.6L677 278.5L673.9 279.2L671.8 278L670.6 274L672.3 269.6L672.3 264.4L674.4 262.4L677.9 260.5L679.1 258.2Z"/>
<path fill="#ffffff" d="M670.4 254.5L670.9 254.9L670.6 255.4Z"/>
<path fill="#ffffff" d="M695.2 269.6L695.9 269.9L695.4 270.5Z"/>
<path fill="#ffffff" d="M691.6 271.2L692.4 271.5L691.9 271.9Z"/>
<path fill="#ffffff" d="M553.1 207.8L553.8 208.2L553.5 208.5ZM550.5 204.7L551 204.8L550.7 205.2Z"/>
<path fill="#ffffff" d="M606.2 233.9L606.7 234.1L606.3 234.6Z"/>
<path fill="#ffffff" d="M691.8 242.5L692.1 242.7L691.9 243Z"/>
<path fill="#e0f0df" d="M658.1 171.9L657.6 173L657.8 174L658.5 174.2L658.8 174.8L657.6 176.2L657.1 176.4L657.4 177.4L659.2 178.1L662.7 176.2L666.5 174.4L667.1 170.7L669 169.7L666.5 169.7L663 170.4L659.5 170.4L659 171.2Z"/>
<path fill="#c6e3c5" d="M657.8 174L658.5 174.2L658.8 174.8L657.6 176.2L657.1 176.4L656.2 176.7L656.9 175.3Z"/>
<path fill="#c6e3c5" d="M656.2 176.7L657.1 176.4L657.4 177.4L657 177.9L656.9 179.5L656.8 180.3L656 183L655.9 183L654.6 179.8L655.5 178.6Z"/>
<path fill="#e0f0df" d="M657.4 177.4L659.2 178.1L662.7 176.2L663.4 178.2L659.5 179.5L661.3 181.2L660.4 182.1L658 183.5L656 183.2L656 183L656.8 180.3L656.9 179.5L657 177.9Z"/>
<path fill="#c6e3c5" d="M669 169.7L672.3 169.8L673.2 169.5L674.2 171.6L675.6 173.2L674.4 174L674.2 175.3L675.5 176.8L677.8 177.9L678.4 180.3L678.8 181.2L679.7 182.2L678.8 182.1L678.3 181.9L677 182.1L676.3 183.7L673 183.5L668.3 180.2L665.5 178.8L663.4 178.2L662.7 176.2L666.5 174.4L667.1 170.7Z"/>
<path fill="#c6e3c5" d="M678.8 182.1L678.3 181.9L677 182.1L676.3 183.7L677.9 183.8L679.5 184.6L678.8 183.2Z"/>
<path fill="#5aab5a" d="M655.9 183.2L658 183.5L660.4 182.1L661.3 181.2L659.5 179.5L663.4 178.2L665.5 178.8L668.3 180.2L673 183.5L676.3 183.7L677.9 183.8L679.5 184.6L680.4 186.3L681.8 187.7L682.6 188.2L682.6 189.8L683.7 191.2L684.6 191.7L685.1 192.2L686.8 194.5L691.4 194.9L692.3 196.1L691 199.6L685.8 201.3L680.5 202L678.8 202.8L676.2 204.5L674.2 204.2L671.8 204.2L670.6 204L670.4 205.4L669.7 205.9L669.2 204.8L667.4 202.2L665.7 199.9L663.4 197.2L662.2 193.5L660.1 191.2L658.7 189.1L656.9 186.5L655.3 185.4Z"/>
<path fill="#c6e3c5" d="M669.7 205.9L670.4 205.4L670.6 204L671.8 204.2L674.2 204.2L676.2 204.5L678.8 202.8L680.5 202L685.8 201.3L687.7 205.5L686.1 207.3L680.5 210.1L677.9 211L673.5 212.2L670.9 212.4L670.4 211L669.7 208.3Z"/>
<path fill="#c6e3c5" d="M687.7 205.5L685.8 201.3L691 199.6L692.3 196.1L691.4 194.9L692.4 192.6L692.8 191L693.5 191L694.2 192.2L697.3 193.3L699.4 195.2L697.2 198.9L695.9 201.3L693.7 203.1L691 204ZM693 189L693.5 188.4L693.5 189.8Z"/>
<path fill="#c6e3c5" d="M685.1 192.2L686.8 194.5L691.4 194.9L692.4 192.6L692.8 191L693.5 191L693.5 189.8L693 189L691.6 190.2L690 191.7L686.7 192.2Z"/>
<path fill="#c6e3c5" d="M683.7 191.2L683.7 190L684.4 188.9L685.1 189.6L685.1 191L684.6 191.7Z"/>
<path fill="#5aab5a" d="M673.2 165.1L675.3 166.5L677.9 165.5L679.3 165.6L680.4 167.4L681.4 169L684 170.2L687.5 170L689.1 169.2L691.9 168.1L694.9 167.8L698.6 169L701.9 170.6L701.9 172.3L700.8 174.6L701.4 176L700.8 178.6L702.9 179.7L702.9 180.7L701.4 182.4L702.9 183.8L704.7 185.2L704.7 187L705.6 187.2L705.4 188L702.9 188.8L702.6 190.5L698 190.2L695.1 189.4L693.3 187L690.5 188.2L688.2 187.7L684.9 185.8L683.7 184L682.6 182.1L680.5 181.4L679.7 182.2L678.8 181.2L678.4 180.3L677.8 177.9L675.5 176.8L674.2 175.3L674.4 174L675.6 173.2L674.2 171.6L673.2 169.5L671.8 167.4L672.5 165.6Z"/>
<path fill="#e0f0df" d="M664.8 158.6L667.4 160.4L667.8 161.6L667.4 162L669.3 161.8L670.9 162.7L673.5 162.5L676.2 162.7L676.2 161.3L673.5 159.9L671.4 159.9L669.2 159Z"/>
<path fill="#e0f0df" d="M670.9 162.7L673.5 162.5L674.6 163.2L675.1 164.2L676.2 165.5L676.2 166.5L675.3 166.5L673.2 165.1L671.3 164.4Z"/>
<path fill="#e0f0df" d="M673.5 162.5L676.2 162.7L676.2 161.3L677.6 162.3L679.7 161.4L680.9 162.8L682.8 163.9L681.4 164.2L681.1 165.8L680.4 167.4L679.3 165.6L677.9 165.5L675.3 166.5L676.2 166.5L676.2 165.5L675.1 164.2L674.6 163.2Z"/>
<path fill="#c6e3c5" d="M680.5 153.4L679.1 151.1L676.7 150.1L679.7 146.8L683.7 144.1L686.7 144.5L690.2 145.3L693.7 145.3L698.9 146.2L702.4 145.7L699.8 145.3L701.5 142.7L702.4 140.1L709.4 139.1L714.7 138.3L718.2 137.8L719.4 139.8L723.4 140.4L728.7 139.8L731.1 141.3L735 145.7L740 145.3L743.5 146.8L744.1 147.6L748.4 148.5L747.6 148.7L744.9 149.9L744.6 152L740 152L738.8 155L734.8 155.8L736.2 159L735.3 160.8L733 159.7L727.4 159.5L723.4 159.3L723.4 160.4L720.4 159.7L718.9 160.8L717.6 161.8L715.5 162.1L714 162L713.8 163.2L711.5 162.5L710.3 160.4L710.5 159.3L708.4 158.1L703.3 158.5L701.7 157.1L697.3 154.8L692.8 155.8L692.8 162.3L689.6 160.6L687.5 160.9L686.5 161.6L687.2 159.9L684.4 159L682.8 157.1L684 156.6L684.6 155.3L687.5 155.3L687.5 152.5L684.4 152.2Z"/>
<path fill="#e0f0df" d="M692.8 155.8L697.3 154.8L701.7 157.1L703.3 158.5L708.4 158.1L710.5 159.3L710.3 160.4L711.5 162.5L713.8 163.2L714 162L715.5 162.1L717.6 161.8L718.9 160.8L719.6 161.1L718.2 162.1L720.3 162L722.5 163.2L720.3 164.2L718.2 164.2L718 162.8L716.1 163.2L716.1 164.2L714.8 164.6L713.4 165.5L714.7 167.8L713.4 169.5L711.2 169.1L711.2 168.1L706.8 166.5L704.2 164.6L703.1 162.7L700 162.1L699.8 160.8L697.3 159.7L695.9 160.8L694.4 161.3L694.5 162.3L692.8 162.3Z"/>
<path fill="#f3f9f2" d="M686.5 161.6L687.5 160.9L689.6 160.6L692.8 162.3L694.5 162.3L694.4 161.3L695.9 160.8L697.3 159.7L699.8 160.8L700 162.1L703.1 162.7L704.2 164.6L706.8 166.5L711.2 168.1L711.2 169.1L708.2 169.7L707.7 171.1L705 172.7L703.8 172.8L701.9 172.3L701.9 170.6L698.6 169L694.9 167.8L691.9 168.1L689.1 169.2L688.9 166.3L688.1 165.5L688.4 164.6L687.2 164.6L687.4 162.8L689.3 162Z"/>
<path fill="#e0f0df" d="M735.3 160.8L733 159.7L727.4 159.5L723.4 159.3L723.4 160.4L720.4 159.7L718.9 160.8L719.6 161.1L718.2 162.1L720.3 162L722.5 163.2L720.3 164.2L718.2 164.2L716.4 165.3L719 165.6L723.8 165.5L724.3 164.4L727.1 163.6L729.4 162.8L731.6 162.7Z"/>
<path fill="#f3f9f2" d="M713.4 169.5L714.7 167.8L713.4 165.5L714.8 164.6L716.1 164.2L716.1 163.2L718 162.8L718.2 164.2L716.4 165.3L719 165.6L723.8 165.5L723.9 167.1L725.9 167.4L725.9 169.3L723.1 169.1L720.4 170.4L719.9 168.3L717.8 167.4L716.2 169.5L714 169.8Z"/>
<path fill="#f3f9f2" d="M701.4 182.4L702.9 180.7L702.9 179.7L700.8 178.6L701.4 176L700.8 174.6L701.9 172.3L703.8 172.8L705 172.7L707.7 171.1L708.2 169.7L711.2 169.1L713.4 169.5L714 169.8L716.2 169.5L717.8 167.4L719.9 168.3L720.4 170.4L723.1 169.1L725.9 169.3L725.2 169.8L721.7 170.2L719.4 171.6L720.1 173.5L719 175.1L717.3 175.1L717.1 176.7L716.1 178.6L714.1 178.9L711.7 180L710.8 182.3L707.1 183L704.2 183.2Z"/>
<path fill="#5aab5a" d="M702.6 190.5L702.9 188.8L705.4 188L705.6 187.2L704.7 187L704.7 185.2L702.9 183.8L701.4 182.4L704.2 183.2L707.1 183L710.8 182.3L711.7 180L714.1 178.9L716.1 178.6L717.1 176.7L717.3 175.1L719 175.1L720.1 173.5L719.4 171.6L721.7 170.2L725.2 169.8L725.9 169.3L727.4 170.2L730.9 172.5L729.5 173.3L725.2 173.9L724.1 174.8L724.6 176.5L726.6 178.1L725.2 178.9L725.3 180.3L724.1 182.1L722.5 183.5L720.6 185.8L718.3 185.6L716.6 187L717.8 189.6L718.9 191.9L715.2 192.1L714.1 193.1L712.8 192.6L712 191.2L711.2 190.2L707.7 190.5L704.2 190.5Z"/>
<path fill="#5aab5a" d="M714.1 193.1L715.2 192.1L718.9 191.9L717.8 189.6L716.6 187L718.3 185.6L720.6 185.8L722.5 183.5L724.1 182.1L725.3 180.3L725.2 178.9L726.6 178.1L724.6 176.5L724.1 174.8L725.2 173.9L729.5 173.3L730.9 172.5L733 174.6L732.5 176.8L733.8 177.7L732.5 179.5L733.4 180.3L736.5 181.8L735 184.2L738.3 185.8L741.8 186.7L744.9 188L749 188.4L749 185.8L750.2 185.6L750.4 186.8L750.5 187.7L755.8 187.7L755.1 185.8L756.7 185.8L759.6 183.8L761.8 183.7L763.3 183.3L765.1 185.1L764.5 187L761.4 187.9L760.3 190.5L760.5 192.6L758.1 192.6L758.2 194L756.8 196.1L756.3 193.1L754.4 193.5L754.6 192.2L756.5 190.8L752.3 190.3L751.9 189.1L749.5 188.2L749 189.4L750.4 190.5L749 191.7L750 192.2L750.4 194.7L750.7 196.4L748.8 196.8L747 197.8L746.7 199.2L744.4 200.1L741.8 202.6L738.8 204.8L737.1 206.1L735.3 206.9L735 209.2L735.3 211.5L734.6 213.6L734.4 216.6L733 218.3L731.6 219L730.4 220.4L728.7 218.8L727.3 214.5L725.7 212L724.3 208.3L723.1 204.8L722.2 201.3L722 197.8L721.7 196.4L720.8 197.5L718.7 198.4L715.5 195.8L717.8 194.5L716.6 194.7L715.2 194Z"/>
<path fill="#c6e3c5" d="M735 184.2L736.5 181.8L738.6 181.9L741.8 183.7L744.9 185.1L749 185.8L749 188.4L744.9 188L741.8 186.7L738.3 185.8Z"/>
<path fill="#ffffff" d="M750.5 187.7L750.4 186.8L751.9 185.2L755.1 185.8L755.8 187.7Z"/>
<path fill="#9bd09a" d="M750.7 196.4L750.4 194.7L750 192.2L749 191.7L750.4 190.5L749 189.4L749.5 188.2L751.9 189.1L752.3 190.3L756.5 190.8L754.6 192.2L754.4 193.5L756.3 193.1L756.8 196.1L756.8 197.3L756.3 198.4L755.4 195.6L753.3 195.6L752.6 196.4Z"/>
<path fill="#c6e3c5" d="M734.4 217.8L735.1 217.4L736.9 219.7L738.1 222L737.6 223.4L735.8 224.3L734.8 223.8L734.4 221.5L734.6 219.2Z"/>
<path fill="#1a531a" d="M823.3 160.4L823.3 159.7L824.4 158.5L824 156L827.5 155.5L830.7 150.1L824 151.1L823.5 149L817.9 147.4L815.3 142.4L810.9 141L805.7 141.5L804.4 144.5L800.9 148L799 147.3L796.9 150.6L800.4 151.1L804.4 152.3L801.3 152.9L798.7 153.6L794.3 155.8L790.4 155.8L789.9 158.1L786.4 160.2L778.5 161.4L771.5 160.1L763.7 159.7L761 157.2L754 155.5L753.5 152.3L748.8 149.7L748.4 148.5L747.6 148.7L744.9 149.9L744.6 152L740 152L738.8 155L734.8 155.8L736.2 159L735.3 160.8L731.6 162.7L729.4 162.8L727.1 163.6L724.3 164.4L723.8 165.5L723.9 167.1L725.9 167.4L725.9 169.3L727.4 170.2L730.9 172.5L733 174.6L732.5 176.8L733.8 177.7L732.5 179.5L733.4 180.3L736.5 181.8L738.6 181.9L741.8 183.7L744.9 185.1L749 185.8L750.2 185.6L750.4 186.8L751.9 185.2L755.1 185.8L756.7 185.8L759.6 183.8L761.8 183.7L763.3 183.3L765.1 185.1L766.6 186.3L767.5 189.1L765.6 191.2L765.6 192.8L767.9 194L768.6 195.9L770.1 197L771.7 196.4L772.9 197.5L772.9 195.4L773.6 195.2L775 195.2L777.5 194.7L779.1 193.8L781.5 194.7L781.3 196.1L783.6 196.9L786.4 197L786.9 198.7L787.6 199.1L788.2 197.5L790.4 196.8L793.4 195.8L794.8 195.4L796.9 194.9L799 193.8L801.3 191.9L803.9 190L804.8 187.3L806.9 185.1L808.1 183L807.4 181.6L806.2 181.6L808.1 180.5L807.9 179.1L806.4 177.5L805.1 174.6L803.4 173.3L805.3 171.4L809.2 170L809.2 169.1L806.5 168.8L803 169.5L802.2 167.8L800.8 166.3L803 165.8L806.5 163.2L808.3 163.7L806.9 166L807.4 166.7L810 165.3L812.3 164.6L815.3 162L817 161.8L819.1 162L819 161.1L822 159.5ZM785 201L786.4 199.6L788.5 199.4L789 200.3L787.3 202.4L785.5 202.4Z"/>
<path fill="#5aab5a" d="M806.5 190.8L808.1 190.8L807.4 193.5L806.4 196.1L805.1 194.7L805.3 192.9Z"/>
<path fill="#e0f0df" d="M748.4 148.5L751.4 147.4L755.8 145.7L761 147.1L766.3 146.8L768 143.6L773.6 144.5L774.2 145.9L782 147.1L788.2 148.5L792.5 147.1L799 147.3L796.9 150.6L800.4 151.1L804.4 152.3L801.3 152.9L798.7 153.6L794.3 155.8L790.4 155.8L789.9 158.1L786.4 160.2L778.5 161.4L771.5 160.1L763.7 159.7L761 157.2L754 155.5L753.5 152.3L748.8 149.7Z"/>
<path fill="#ffffff" d="M812.3 164.6L815.3 162L817 161.8L819.1 162L819 161.1L822 159.5L823.3 160.4L823.5 160.6L821.8 162.3L821.8 163.2L818.8 164.6L817.9 165.5L819.3 167.1L817 167.6L815.3 168.4L813.5 168.4L813.9 166.9L813.5 165.3Z"/>
<path fill="#5aab5a" d="M819.3 167.1L821.2 169.8L821.2 172.5L820.5 173.2L817.9 173.9L816 174.4L816.2 172.5L816.5 170.2L815.3 168.4L817 167.6ZM815.6 176.2L816.9 176L816.3 176.5Z"/>
<path fill="#5aab5a" d="M842.4 162.1L843.1 164.6L842.8 167.2L841.5 168.4L841.4 170.7L841.2 172.1L839.6 173.5L839.3 172.8L837.7 173.9L836.6 174L834.5 174L834.2 174.4L833.3 175.8L832.5 176L831.2 174.6L831.4 173.9L829.3 174L826.7 174.6L824 175.1L823.9 174.6L825.8 173L827.9 172.3L830.2 172.3L832.6 172.1L834 170.4L834.5 169L835.1 170.2L837.2 169.1L838.8 167.8L839.8 165.1L839.6 163.6L840.3 162.5L841.5 162ZM840.3 162L841.9 161.4L839.8 160.2L840.5 158.8L842.2 158.8L842.8 155.1L845 156.7L849.1 157.1L849.6 158.8L846.8 159.5L845.6 161.1L842.8 160.1L841.4 160.6ZM823.9 175.3L825.3 175.8L825.8 177.2L824.8 179.7L823.5 180.3L822.6 179.8L822.6 177.7L821.8 176.8L822.1 176ZM826.7 175.4L829.6 174.6L830.5 175.4L829.6 176.3L827.5 177.2L826.5 176.3Z"/>
<path fill="#f3f9f2" d="M756.3 198.4L756.8 197.3L756.8 196.1L758.2 194L758.1 192.6L760.5 192.6L760.3 190.5L761.4 187.9L764.5 187L765.1 185.1L766.6 186.3L767.5 189.1L765.6 191.2L765.6 192.8L767.9 194L768.6 195.9L770.1 197L771.7 196.4L771.9 197.5L770 199.1L768.9 199.1L766.3 200.1L765.9 202.2L765.2 202.2L767.3 206.1L766.6 208L768.4 211.8L769.1 213.9L767.7 216.6L767.3 217.1L767.2 213.6L766.5 210.1L765.8 206.9L765.6 205.7L763.7 205.7L761.8 206.9L759.8 206.6L760.2 204L759.8 201.7L758.4 199.9Z"/>
<path fill="#9bd09a" d="M767.3 217.1L767.7 216.6L769.1 213.9L768.4 211.8L766.6 208L767.3 206.1L765.2 202.2L765.9 202.2L766.3 200.1L768.9 199.1L770 199.1L770.7 200.5L771.9 200.5L771.9 203.4L773.5 202.8L774.5 203.3L776.8 202.6L778.2 204.2L778.2 206.1L779.6 207.3L779.4 209.4L778.2 209.4L775 209.8L774.2 211L774.7 213.1L774.9 214.1L773.3 212.7L771.5 212.4L771.4 211.2L769.8 211.2L769.8 213.6L768.9 215.3L768.4 218L769.8 219.7L770.5 222L772.8 222.7L773.5 223.8L771.7 224.6L770.1 223.2L769.3 222.5L768 220.6L766.8 220.6L766.8 218.8Z"/>
<path fill="#e0f0df" d="M771.9 197.5L770 199.1L770.7 200.5L771.9 200.5L771.9 203.4L773.5 202.8L774.5 203.3L776.8 202.6L778.2 204.2L778.2 206.1L779.6 207.3L779.4 209.4L780.3 209.4L782.9 208.9L782.9 206.9L781.2 204.8L778.5 201.9L776.8 200.5L777.7 198.9L775.4 198.2L774.9 196.6L773.6 195.2L772.9 195.4L772.9 197.5L771.7 196.4Z"/>
<path fill="#9bd09a" d="M783.6 196.9L781.3 196.1L781.5 194.7L779.1 193.8L777.5 194.7L775 195.2L773.6 195.2L774.9 196.6L775.4 198.2L777.7 198.9L776.8 200.5L778.5 201.9L781.2 204.8L782.9 206.9L782.9 208.9L782.9 211L782.9 213.1L780.3 214.1L780.6 215.3L778.5 215.5L777.5 216.4L778.2 219.5L779.1 219.2L781.7 216.4L783.8 215.9L785.9 214.1L786.1 211.8L785.4 207.8L782.9 205.4L781.2 203.4L779.8 201.3L781.3 198.9L782 197.8Z"/>
<path fill="#e0f0df" d="M774.9 214.1L774.7 213.1L774.2 211L775 209.8L778.2 209.4L779.4 209.4L780.3 209.4L782.9 208.9L782.9 211L782.9 213.1L780.3 214.1L780.6 215.3L778.5 215.5L777.5 216.4L776.1 216.2L775.2 215.3Z"/>
<path fill="#5aab5a" d="M770.1 223.2L771.7 224.6L773.5 223.8L775.8 226.2L775.8 229.3L777.1 232.2L775.9 232.3L772.2 229.9L770.8 227.6L770.3 224.8ZM786.6 231.1L789.4 232L789 230L792.5 228.8L794.3 226.7L796.9 225.5L798.1 223.4L799.5 222.3L800.8 223.6L803.4 225.3L801.6 226.7L800.6 227.2L797.4 227.1L796 229.3L795.5 232L791.7 232L789 232.8L787.3 232.5Z"/>
<path fill="#c6e3c5" d="M786.6 231.1L787.3 232.5L789 232.8L791.7 232L795.5 232L796 229.3L797.4 227.1L800.6 227.2L800.9 229.3L801.3 231.1L803 232.8L800.9 233.2L800.4 235.5L798.7 237.2L798.3 239.8L797.8 241.2L795.3 241.8L794.3 240.5L790.8 240.5L787.6 239.7L787.3 237.2L785.5 235.5L785.5 233.2ZM761.6 224.8L765.4 225.5L767.5 227.9L770.5 230.6L772.6 231.6L775 233.7L776.4 236.2L777.7 237.8L780.3 239.8L780.1 242.5L779.9 244.8L777.8 244.8L776.4 243.3L773.8 241.6L771.5 239L770.3 236L768.2 234.1L767.5 231.6L764.9 229L761.9 226.4ZM778.9 246.5L780.3 244.9L784.7 246.3L788.5 245.8L791.8 246.7L795 248.1L795 249.7L792 249.3L787.3 248.6L784.7 248.2L781.2 247.5ZM795.3 248.9L797.1 249.1L796.4 250ZM797.8 249.1L799 249.3L798.3 250.2ZM799.2 249.5L803 249.1L803 249.8L799.5 250.3ZM804.6 249.3L809.7 248.9L809.7 249.8L804.8 250ZM803 251.2L806.2 251.9L804.8 252.4ZM810.9 252.6L813.5 250.7L817 249.3L817 250L813.5 251.8L811.8 252.6ZM804.4 233.2L806.2 232.3L810 233L813.5 231.8L812.7 233.9L810 233.7L806.5 233.9L805.1 236.2L807.4 236.2L810.6 236L809.7 237.2L807.8 237.9L809 240.4L810 242.5L809.2 244L807.4 242.8L806.5 239.5L805.5 239.8L805.5 244.2L803.9 244.2L803.8 240.7L802.9 239.3L804.4 234.9ZM817.9 231.4L818.8 230.9L820 232.3L819.1 234.1L818.8 235.8L818.1 233.2ZM818.8 239.8L823.7 240L822.3 240.9L819.1 240.7ZM815.3 240.2L817.4 240.4L816.2 241.2ZM824 236L826.7 235.3L829.3 236L831 240.4L833.7 238.4L836.3 237.6L841.5 239.2L841.5 250.5L838.9 248.8L836.3 249.3L837.7 246.8L836.3 244.2L831.9 242.5L828.4 241.6L827.2 241.8L825.8 239.5L829 238.6L826.3 238.4L824 237ZM829.6 244.8L830.5 244.9L830.2 246.5L829.5 245.8ZM824 247.9L825.3 247.2L825.1 248.4ZM764.5 232.2L765.9 233.2L765.4 232.2ZM767.3 236.3L768.4 237.6L767.7 237.4ZM779.9 237.4L781.5 238.4L781.2 239.8L779.8 238.4ZM783.1 239.2L784.1 239.5L783.6 240.2Z"/>
<path fill="#f3f9f2" d="M841.5 239.2L844.2 240.2L847.7 241.2L850 244L852.6 244.9L853.5 246.3L852 246.5L853.8 248.6L856.4 251.2L858.7 252.6L857 253.2L853.5 252.3L851.2 250.2L847.7 247.9L845.9 249.1L845 250.7L841.5 250.5ZM854.3 244.4L857.3 244.2L859.9 241.9L861.3 242.1L860.5 244.2L857.6 245.4L854.7 245.4ZM858.7 239.2L861.7 241.2L862.5 242.8L861.7 241.9L859 239.8ZM865.5 244.2L867.5 246.5L866.4 246ZM851.5 238.1L852.6 238.3L852 238.6Z"/>
<path fill="#c6e3c5" d="M805.8 202.2L808.6 202.2L808.6 204.8L807.6 206.6L807.6 208.7L809.2 209.8L811.8 210.4L811.8 212.5L810.6 211.8L809.2 211L807.9 210.3L806 210.4L805.8 209L804.8 207.5L805.3 206.1L805.5 204ZM805.5 211.2L807.2 211.3L807.1 213.1L806.4 212.9ZM799.9 219.9L803.9 215.7L803.6 217.1L800.9 219.5ZM812.3 212.7L814.1 212.9L814.8 215L813.9 216.6L813 216.8L812.5 214.8ZM808.3 213.9L810.2 214.5L809.7 216.2L810.6 218.3L809.3 218L809 216.4L808.1 216.2ZM810.8 216.4L811.8 215L811.3 217.1L810.8 218ZM808.3 222.3L808.8 220.6L811.4 219.7L813 218.8L814.4 217.6L816 219.9L816.2 222.3L815.6 223.6L814.4 223.2L814.1 224.4L812.1 223.8L811.8 221.7L810.6 221.5L808.6 222.5Z"/>
<path fill="#c6e3c5" d="M794.3 226.7L795.5 226L796.6 226L796 227.1L795.2 227.4Z"/>
<path fill="#256625" d="M792.9 280.3L793.4 277.5L793.9 274L794.6 272.8L796.9 271.4L799.5 270.6L803 269.6L806.5 268.9L808.8 266.1L808.6 264.7L810.9 264.9L811.1 262.9L813.5 261.7L815.3 259.4L817 258.9L818.8 260.5L821.4 260.7L822 258.2L823.3 256.3L824.9 255.9L827 254.5L828.4 255.2L831.4 255.9L834.2 255.8L833.7 257.9L832.5 260.3L834.2 262.4L837.2 264L838.9 265.2L841.2 265.2L842.4 261.7L842.8 258.2L843 256.5L843.6 253.8L844.3 253.3L845.6 256.5L846.5 259.6L848.9 260.7L849.4 263.5L850.6 267.5L852.9 268.6L855.5 270.5L856.6 273.6L858.7 275.7L861.7 278L862.9 281L863.6 284.6L862.5 288L861.7 291.3L859.6 293.8L858.3 296.6L857.3 299.7L856.4 300.8L853.5 300.9L851 303L848.5 301.8L846.8 302L844.2 301.8L841.5 301.3L839.5 299.4L838.9 297.2L836.6 296.9L836.6 295L835.8 292.4L835.1 294.4L834.2 296.4L832.3 295.7L831 293.6L829.3 292L825.8 290.6L822.3 289.9L818.8 290.8L815.3 291.1L812.7 292.4L810.9 293.9L806.5 293.9L803.9 294.8L801.3 296L798.7 295.9L796.2 294.6L796 293.4L797.3 291.5L797.3 289.7L796 287.1L795.3 284.5L794.3 282.4ZM848 305.8L851.2 306.5L854.1 306L854.3 308.4L852.6 310.4L850.6 310.9L849.1 309.5L848.9 307.8ZM833.8 296.9L836.3 297.1L835.4 297.8L833.8 297.6ZM822.6 254.4L824.8 254.4L824 255.4L822.8 255.2ZM833.5 258.8L834.4 259.3L833.8 259.6Z"/>
<path fill="#5aab5a" d="M897 294.8L898.1 295.9L900.2 297.9L901.9 298.5L902.6 300.2L904.5 300.9L907 300.4L906.3 302.3L904.5 303.2L904.5 304.2L902.8 306.4L901.4 307.4L900.5 306.9L901.4 304.9L899 303.6L900.3 302.5L900.5 300.2L899.6 298.6L898.1 296.9ZM897 305.5L899.1 306.4L899.8 307.8L898.1 309.9L897.2 311.2L894.6 312.1L893.7 314.9L891.4 316.1L889.3 316.1L886.5 315.4L886.7 313.9L889.1 311.8L892.8 309.9L894.6 308.1L896 306.4ZM888.1 316.5L889.1 316.7L888.8 317.4L887.9 317.2Z"/>
<path fill="#ffffff" d="M869.5 247.4L872.2 248.6L871.6 248.9ZM874.5 250.9L876.2 251.8L874.8 251.8ZM876.2 249.5L877.1 251.2L876.4 250.7ZM877.4 252.6L878.8 253.5L877.8 253.3Z"/>
<path fill="#ffffff" d="M886.5 260.9L887.4 261.9L886.7 261.9ZM887.8 262.9L888.5 263.5L887.9 263.6ZM889.3 265.4L889.7 265.8L889.1 265.8Z"/>
<path fill="#ffffff" d="M881.8 269.8L884.4 271.4L887 273.6L885.8 273.4L882.7 271.2Z"/>
<path fill="#ffffff" d="M905.1 265.4L907.3 265.6L906.3 266.4L905.1 266.1ZM908 263.3L909.6 263.1L908.6 264Z"/>
<path fill="#ffffff" d="M292.6 258.2L293.4 258.4L292.9 258.8ZM294 258.8L294.7 258.9L294.1 259.1Z"/>
<path fill="#ffffff" d="M288 271.5L288.5 271.7L288.2 271.9Z"/>
<path fill="#ffffff" d="M333 265.2L333.7 265.4L333.3 265.8Z"/>
<path fill="#ffffff" d="M351.2 251.6L351.7 251.8L351.4 251.9Z"/>
<path fill="#ffffff" d="M319.2 231.3L319.7 231.4L319.3 231.6ZM897.4 231.4L897.7 232.2L897.4 232.3ZM898.1 233.7L898.4 234.2L898.1 234.4ZM899.8 235.5L900.3 236L900 236.2ZM901.8 237.4L902.3 237.9L901.9 238.1ZM902.8 239L903.1 239.3L902.8 239.5Z"/>
<path fill="#ffffff" d="M848 211L848.4 211.2L848.2 211.3Z"/>
<path fill="#ffffff" d="M871.6 222.5L871.8 222.7L871.6 222.7Z"/>
<path fill="#ffffff" d="M836.3 217.8L836.6 218L836.5 218.2Z"/>
<path fill="#ffffff" d="M879.9 225.2L880.2 225.3L879.9 225.5Z"/>
  </g>
  <g fill="#0a4a0a">
    <rect x="272.5" y="78.3" width="17" height="53.6" rx="8.5"/>
    <rect x="263" y="96" width="36" height="17.8" rx="8.9"/>
    <rect x="272.5" y="137" width="17" height="53" rx="8.5"/>
  </g>
  <g fill="#fff">
    <path d="M281 82.5L286.5 92.5L275.5 92.5Z"/>
    <path d="M281 127.5L286.5 117.5L275.5 117.5Z"/>
    <path d="M266.5 105L275.5 100L275.5 110Z"/>
    <path d="M295.5 105L286.5 100L286.5 110Z"/>
    <rect x="276.5" y="146" width="9" height="1.8"/>
    <rect x="280.1" y="142.4" width="1.8" height="9"/>
    <rect x="276.5" y="180.3" width="9" height="1.8"/>
  </g>
  <g>
    <circle cx="281" cy="164" r="7.3" fill="#dfe2fb" stroke="#6a6fd0" stroke-width="0.9"/>
    <g fill="none" stroke="#5258c8" stroke-width="0.85">
      <ellipse cx="281" cy="164" rx="3.6" ry="7.3"/>
      <path d="M281 156.7V171.3M273.7 164H288.3M274.8 160.3H287.2M274.8 167.7H287.2"/>
    </g>
  </g>

  </svg>

  <!-- legend -->
  <div style="position:absolute;left:8px;top:400px;width:152px;height:20px;background:linear-gradient(90deg,#ffffff 0%,#c4dfc3 27%,#82b982 52%,#2c862c 80%,#055a05 100%)"></div>
  <div class="t" style="left:10px;top:400px;font-size:12px;line-height:14px;color:#111">0</div>
  <div class="t" style="left:99px;top:400px;font-size:12px;line-height:14px;color:#111">78,572</div>

  <div style="position:absolute;left:0;top:430px;width:715px;height:1px;background:#d6d6d6"></div>
  <div class="t" style="left:20px;top:440px;font-size:14px;font-weight:bold;color:#2b2b2b;line-height:18px">Report View by Selection</div>
  <div class="t" style="left:623px;top:440px;font-size:14px;font-weight:bold;color:#0d5a86;line-height:18px">Customize</div>

  <div style="position:absolute;left:0;top:466px;width:710px;height:38px;background:#f5f5f5;border-top:1px solid #dadada"></div>
<div class="t" style="left:14px;top:470px;font-size:14px;font-weight:bold;color:#2b2b2b;line-height:16.5px">Total:</div>
<div class="t" style="left:22px;top:486.5px;font-size:14px;font-weight:bold;color:#2b2b2b;line-height:16.5px">9</div>
<div class="t" style="left:80px;top:478px;font-size:14px;font-weight:bold;color:#2b2b2b;line-height:16.5px">Research Fields</div>
<div class="t" style="left:216px;top:470px;font-size:14px;font-weight:bold;color:#2b2b2b;line-height:16.5px">Web of Science<br><span style="margin-left:9px">Documents</span></div>
<div class="t" style="left:358px;top:478px;font-size:14px;font-weight:bold;color:#2b2b2b;line-height:16.5px;color:#4a79b3">Cites</div>
<div style="position:absolute;left:396px;top:483px;width:0;height:0;border-left:3.7px solid transparent;border-right:3.7px solid transparent;border-top:4.2px solid #5b8fd0"></div>
<div class="t" style="left:457px;top:478px;font-size:14px;font-weight:bold;color:#2b2b2b;line-height:16.5px">Cites/Paper</div>
<div class="t" style="left:593px;top:478px;font-size:14px;font-weight:bold;color:#2b2b2b;line-height:16.5px">Top Papers</div>
<div class="r" style="top:504px;height:34px;background:#fafafa">
<span class="n" style="right:652px;top:8.0px">1</span>
<span class="f" style="top:3.3px">CLINICAL<br>MEDICINE</span>
<span class="n" style="right:385.5px;top:8.0px">6,147</span>
<span class="n" style="right:273.5px;top:8.0px">74,089</span>
<span class="n" style="right:157px;top:8.0px">12.05</span>
<span class="b" style="top:6.8px"><i style="width:98.0px"></i><b style="color:#fff">56</b></span>
</div>
<div class="r" style="top:538px;height:47px;background:#fcfcfc">
<span class="n" style="right:652px;top:15.2px">2</span>
<span class="f" style="top:4.1px">MOLECULAR<br>BIOLOGY &amp;<br>GENETICS</span>
<span class="n" style="right:385.5px;top:15.2px">1,464</span>
<span class="n" style="right:273.5px;top:15.2px">30,029</span>
<span class="n" style="right:157px;top:15.2px">20.51</span>
<span class="b" style="top:14.0px"><i style="width:12.2px"></i><b style="color:#3d66ab">7</b></span>
</div>
<div class="r" style="top:585px;height:47px;background:#fafafa">
<span class="n" style="right:652px;top:15.2px">3</span>
<span class="f" style="top:4.1px">PHARMACOLOG<br>Y &amp;<br>TOXICOLOGY</span>
<span class="n" style="right:385.5px;top:15.2px">1,362</span>
<span class="n" style="right:273.5px;top:15.2px">16,729</span>
<span class="n" style="right:157px;top:15.2px">12.28</span>
<span class="b" style="top:14.0px"><i style="width:12.2px"></i><b style="color:#3d66ab">7</b></span>
</div>
<div class="r" style="top:632px;height:34px;background:#fcfcfc">
<span class="n" style="right:652px;top:8.7px">4</span>
<span class="f" style="top:4.0px">BIOLOGY &amp;<br>BIOCHEMISTRY</span>
<span class="n" style="right:385.5px;top:8.7px">1,358</span>
<span class="n" style="right:273.5px;top:8.7px">14,675</span>
<span class="n" style="right:157px;top:8.7px">10.81</span>
<span class="b" style="top:7.5px"><i style="width:7.0px"></i><b style="color:#3d66ab">4</b></span>
</div>
<div class="r" style="top:666px;height:26px;background:#fafafa">
<span class="n" style="right:652px;top:4.7px">5</span>
<span class="f" style="top:6.4px">IMMUNOLOGY</span>
<span class="n" style="right:385.5px;top:4.7px">790</span>
<span class="n" style="right:273.5px;top:4.7px">12,409</span>
<span class="n" style="right:157px;top:4.7px">15.71</span>
<span class="b" style="top:3.5px"><i style="width:15.8px"></i><b style="color:#3d66ab">9</b></span>
</div>
<div class="r" style="top:692px;height:34px;background:#fcfcfc">
<span class="n" style="right:652px;top:8.7px">6</span>
<span class="f" style="top:4.0px">NEUROSCIENCE<br>&amp; BEHAVIOR</span>
<span class="n" style="right:385.5px;top:8.7px">871</span>
<span class="n" style="right:273.5px;top:8.7px">11,418</span>
<span class="n" style="right:157px;top:8.7px">13.11</span>
<span class="b" style="top:7.5px"><i style="width:15.8px"></i><b style="color:#3d66ab">9</b></span>
</div>
<div class="r" style="top:726px;height:34px;background:#fafafa">
<span class="n" style="right:652px;top:8.7px">7</span>
<span class="f" style="top:4.0px">ENVIRONMENT/E<br>COLOGY</span>
<span class="n" style="right:385.5px;top:8.7px">384</span>
<span class="n" style="right:273.5px;top:8.7px">4,926</span>
<span class="n" style="right:157px;top:8.7px">12.83</span>
<span class="b" style="top:7.5px"><i style="width:3.5px"></i><b style="color:#3d66ab">2</b></span>
</div>
<div class="r" style="top:760px;height:47px;background:#fcfcfc">
<span class="n" style="right:652px;top:15.2px">8</span>
<span class="f" style="top:4.1px">SOCIAL<br>SCIENCES,<br>GENERAL</span>
<span class="n" style="right:385.5px;top:15.2px">199</span>
<span class="n" style="right:273.5px;top:15.2px">2,260</span>
<span class="n" style="right:157px;top:15.2px">11.36</span>
<span class="b" style="top:14.0px"><i style="width:8.8px"></i><b style="color:#3d66ab">5</b></span>
</div>
<div class="r" style="top:807px;height:26px;background:#fafafa">
<span class="n" style="right:652px;top:4.7px">0</span>
<span class="f" style="top:6.4px">ALL FIELDS</span>
<span class="n" style="right:385.5px;top:4.7px">14,395</span>
<span class="n" style="right:273.5px;top:4.7px">188,593</span>
<span class="n" style="right:157px;top:4.7px">13.10</span>
<span class="b" style="top:3.5px"><i style="width:98.0px"></i><b style="color:#fff">115</b></span>
</div>
</div>
</body>
</html>
